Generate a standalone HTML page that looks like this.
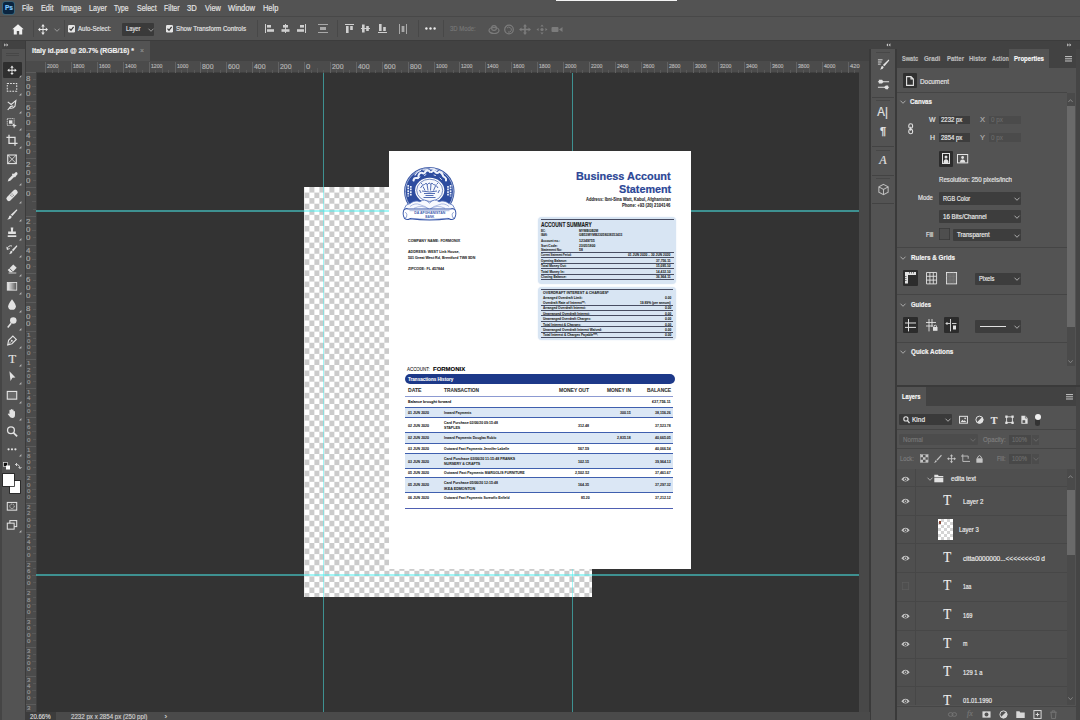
<!DOCTYPE html>
<html lang="en"><head><meta charset="utf-8"><title>Photoshop</title>
<style>
html,body{margin:0;padding:0;background:#333;}
body{width:1080px;height:720px;position:relative;overflow:hidden;font-family:"Liberation Sans",sans-serif;}
#app{position:absolute;left:0;top:0;width:1080px;height:720px;overflow:hidden;background:#333;}
#app div,#app span.t,#app svg{position:absolute;}
span.t{white-space:nowrap;display:block;}
svg{overflow:visible}
span.t{-webkit-text-stroke:0.18px currentColor;}

</style></head><body><div id="app">
<div style="left:0px;top:0px;width:1080px;height:16px;background:#535353;"></div>
<div style="left:0px;top:16px;width:1080px;height:24px;background:#535353;"></div>
<div style="left:0px;top:16px;width:1080px;height:1px;background:#484848;"></div>
<div style="left:555.5px;top:0px;width:121px;height:1.3px;background:#f4f4f4;"></div>
<div style="left:3px;top:2px;width:11px;height:12px;background:#0a2540;border-radius:2px;box-shadow:0 0 0 0.6px #2a6f8f;"></div>
<span class="t" style="top:4.08px;height:8.45px;line-height:8.45px;font-size:6.5px;color:#7fc8ff;font-weight:bold;left:4.6px;transform-origin:0 50%;transform:scale(1.0059,1.0000);">Ps</span>
<span class="t" style="top:2.71px;height:11.18px;line-height:11.18px;font-size:8.6px;color:#e4e4e4;left:22px;transform-origin:0 50%;transform:scale(0.8081,1.0000);">File</span>
<span class="t" style="top:2.71px;height:11.18px;line-height:11.18px;font-size:8.6px;color:#e4e4e4;left:40.6px;transform-origin:0 50%;transform:scale(0.8439,1.0000);">Edit</span>
<span class="t" style="top:2.71px;height:11.18px;line-height:11.18px;font-size:8.6px;color:#e4e4e4;left:60.9px;transform-origin:0 50%;transform:scale(0.8455,1.0000);">Image</span>
<span class="t" style="top:2.71px;height:11.18px;line-height:11.18px;font-size:8.6px;color:#e4e4e4;left:88.9px;transform-origin:0 50%;transform:scale(0.8279,1.0000);">Layer</span>
<span class="t" style="top:2.71px;height:11.18px;line-height:11.18px;font-size:8.6px;color:#e4e4e4;left:114.4px;transform-origin:0 50%;transform:scale(0.7779,1.0000);">Type</span>
<span class="t" style="top:2.71px;height:11.18px;line-height:11.18px;font-size:8.6px;color:#e4e4e4;left:137.1px;transform-origin:0 50%;transform:scale(0.8204,1.0000);">Select</span>
<span class="t" style="top:2.71px;height:11.18px;line-height:11.18px;font-size:8.6px;color:#e4e4e4;left:164.4px;transform-origin:0 50%;transform:scale(0.8164,1.0000);">Filter</span>
<span class="t" style="top:2.71px;height:11.18px;line-height:11.18px;font-size:8.6px;color:#e4e4e4;left:187.3px;transform-origin:0 50%;transform:scale(0.8909,1.0000);">3D</span>
<span class="t" style="top:2.71px;height:11.18px;line-height:11.18px;font-size:8.6px;color:#e4e4e4;left:204.9px;transform-origin:0 50%;transform:scale(0.8548,1.0000);">View</span>
<span class="t" style="top:2.71px;height:11.18px;line-height:11.18px;font-size:8.6px;color:#e4e4e4;left:227.8px;transform-origin:0 50%;transform:scale(0.8863,1.0000);">Window</span>
<span class="t" style="top:2.71px;height:11.18px;line-height:11.18px;font-size:8.6px;color:#e4e4e4;left:262.9px;transform-origin:0 50%;transform:scale(0.8650,1.0000);">Help</span>
<svg style="left:12px;top:23.5px" width="12" height="11" viewBox="0 0 12 11"><path d="M6 0.3 L0.3 5.3 H1.8 V10.6 H4.8 V7 H7.2 V10.6 H10.2 V5.3 H11.7 Z" fill="#f0f0f0"/></svg>
<div style="left:33px;top:20px;width:1px;height:17px;background:#484848;"></div>
<svg style="left:38.3px;top:23.6px" width="10" height="11" viewBox="0 0 10 10" preserveAspectRatio="none"><path d="M5 0 L6.8 2.2 H5.5 V4.5 H7.8 V3.2 L10 5 L7.8 6.8 V5.5 H5.5 V7.8 H6.8 L5 10 L3.2 7.8 H4.5 V5.5 H2.2 V6.8 L0 5 L2.2 3.2 V4.5 H4.5 V2.2 H3.2 Z" fill="#e8e8e8"/></svg>
<svg style="left:53.7px;top:27.8px" width="6" height="4" viewBox="0 0 6 4"><path d="M0.5 0.7 L3 3.3 L5.5 0.7" fill="none" stroke="#9a9a9a" stroke-width="1"/></svg>
<div style="left:64px;top:20px;width:1px;height:17px;background:#484848;"></div>
<svg style="left:68.2px;top:25px" width="7" height="7.4" viewBox="0 0 7 7.4"><rect x="0" y="0" width="7" height="7.4" rx="1.2" fill="#e6e6e6"/><path d="M1.5 3.6 L3 5.3 L5.6 1.8" fill="none" stroke="#333" stroke-width="1.2"/></svg>
<span class="t" style="top:23.8px;height:10.4px;line-height:10.4px;font-size:8px;color:#e6e6e6;left:78.1px;transform-origin:0 50%;transform:scale(0.7573,1.0000);">Auto-Select:</span>
<div style="left:121.5px;top:23.2px;width:32.5px;height:12.4px;background:#3a3a3a;border-radius:1px;"></div>
<span class="t" style="top:24.26px;height:9.88px;line-height:9.88px;font-size:7.6px;color:#e6e6e6;left:126.2px;transform-origin:0 50%;transform:scale(0.7632,1.0000);">Layer</span>
<svg style="left:147.8px;top:28px" width="6" height="4" viewBox="0 0 6 4"><path d="M0.5 0.7 L3 3.3 L5.5 0.7" fill="none" stroke="#9a9a9a" stroke-width="1"/></svg>
<svg style="left:165.6px;top:25px" width="7" height="7.4" viewBox="0 0 7 7.4"><rect x="0" y="0" width="7" height="7.4" rx="1.2" fill="#e6e6e6"/><path d="M1.5 3.6 L3 5.3 L5.6 1.8" fill="none" stroke="#333" stroke-width="1.2"/></svg>
<span class="t" style="top:23.8px;height:10.4px;line-height:10.4px;font-size:8px;color:#e6e6e6;left:175.6px;transform-origin:0 50%;transform:scale(0.7755,1.0000);">Show Transform Controls</span>
<div style="left:257px;top:20px;width:1px;height:17px;background:#484848;"></div>
<svg style="left:264.5px;top:24px" width="10" height="10" viewBox="0 0 10 10"><rect x="0" y="0" width="1" height="9" fill="#cfcfcf"/><rect x="2" y="1" width="4" height="2.6" fill="#cfcfcf"/><rect x="2" y="5.2" width="7" height="2.6" fill="#cfcfcf"/></svg>
<svg style="left:281.3px;top:24px" width="10" height="10" viewBox="0 0 10 10"><rect x="4" y="0" width="1" height="9" fill="#cfcfcf"/><rect x="2" y="1" width="5" height="2.6" fill="#cfcfcf"/><rect x="0.5" y="5.2" width="8" height="2.6" fill="#cfcfcf"/></svg>
<svg style="left:296.9px;top:24px" width="10" height="10" viewBox="0 0 10 10"><rect x="8" y="0" width="1" height="9" fill="#cfcfcf"/><rect x="3" y="1" width="4" height="2.6" fill="#cfcfcf"/><rect x="0" y="5.2" width="7" height="2.6" fill="#cfcfcf"/></svg>
<svg style="left:317.5px;top:24px" width="10" height="10" viewBox="0 0 10 10"><rect x="0" y="0" width="10" height="1" fill="#a8a8a8"/><rect x="0" y="8" width="10" height="1" fill="#a8a8a8"/><rect x="2" y="3" width="6" height="3" fill="#a8a8a8"/></svg>
<div style="left:337px;top:20px;width:1px;height:17px;background:#484848;"></div>
<svg style="left:344.9px;top:24px" width="10" height="10" viewBox="0 0 10 10"><rect x="0" y="0" width="9" height="1" fill="#cfcfcf"/><rect x="1" y="2" width="2.6" height="7" fill="#cfcfcf"/><rect x="5.2" y="2" width="2.6" height="4" fill="#cfcfcf"/></svg>
<svg style="left:361.1px;top:24px" width="10" height="10" viewBox="0 0 10 10"><rect x="0" y="4" width="9" height="1" fill="#cfcfcf"/><rect x="1" y="0.5" width="2.6" height="8" fill="#cfcfcf"/><rect x="5.2" y="2" width="2.6" height="5" fill="#cfcfcf"/></svg>
<svg style="left:377.5px;top:24px" width="10" height="10" viewBox="0 0 10 10"><rect x="0" y="8" width="9" height="1" fill="#cfcfcf"/><rect x="1" y="0" width="2.6" height="7" fill="#cfcfcf"/><rect x="5.2" y="3" width="2.6" height="4" fill="#cfcfcf"/></svg>
<svg style="left:399.0px;top:24px" width="10" height="10" viewBox="0 0 10 10"><rect x="0" y="0" width="1" height="10" fill="#a8a8a8"/><rect x="7" y="0" width="1" height="10" fill="#a8a8a8"/><rect x="2.6" y="2" width="2.8" height="6" fill="#a8a8a8"/></svg>
<div style="left:417.5px;top:20px;width:1px;height:17px;background:#484848;"></div>
<svg style="left:425px;top:27.3px" width="11" height="3" viewBox="0 0 11 3"><circle cx="1.4" cy="1.5" r="1.2" fill="#ececec"/><circle cx="5.5" cy="1.5" r="1.2" fill="#ececec"/><circle cx="9.6" cy="1.5" r="1.2" fill="#ececec"/></svg>
<div style="left:443px;top:20px;width:1px;height:17px;background:#484848;"></div>
<span class="t" style="top:24.06px;height:9.88px;line-height:9.88px;font-size:7.6px;color:#777;left:450px;transform-origin:0 50%;transform:scale(0.7803,1.0000);">3D Mode:</span>
<svg style="left:487.7px;top:23.5px" width="12" height="11" viewBox="0 0 12 11"><ellipse cx="6" cy="6.5" rx="5" ry="3" fill="none" stroke="#7c7c7c" stroke-width="1.2"/><circle cx="6" cy="4" r="2.4" fill="none" stroke="#7c7c7c" stroke-width="1.1"/></svg>
<svg style="left:503.3px;top:23.5px" width="12" height="11" viewBox="0 0 12 11"><circle cx="6" cy="5.5" r="4.3" fill="none" stroke="#7c7c7c" stroke-width="1.2"/><path d="M4 4 A2.5 2.5 0 1 1 5 8" fill="none" stroke="#7c7c7c" stroke-width="1"/></svg>
<svg style="left:519px;top:23.5px" width="12" height="11" viewBox="0 0 12 11"><path d="M6 0 L8 2.5 H6.8 V4.7 H9.5 V3.5 L12 5.5 L9.5 7.5 V6.3 H6.8 V8.5 H8 L6 11 L4 8.5 H5.2 V6.3 H2.5 V7.5 L0 5.5 L2.5 3.5 V4.7 H5.2 V2.5 H4 Z" fill="#7c7c7c"/></svg>
<svg style="left:536px;top:23.5px" width="12" height="11" viewBox="0 0 12 11"><path d="M6 0.5 L7.6 2.6 H4.4 Z M6 10.5 L7.6 8.4 H4.4 Z M0.5 5.5 L2.6 3.9 V7.1 Z M11.5 5.5 L9.4 3.9 V7.1 Z" fill="#7c7c7c"/><circle cx="6" cy="5.5" r="1.6" fill="#7c7c7c"/></svg>
<svg style="left:551.3px;top:23.5px" width="12" height="11" viewBox="0 0 12 11"><rect x="0.5" y="3" width="7" height="5" rx="1" fill="#7c7c7c"/><path d="M8 5.5 L11.5 3 V8 Z" fill="#7c7c7c"/></svg>
<div style="left:0px;top:40px;width:1080px;height:1px;background:#3c3c3c;"></div>
<div style="left:0px;top:41px;width:870px;height:20px;background:#424242;"></div>
<div style="left:25px;top:41px;width:125px;height:20px;background:#535353;"></div>
<span class="t" style="top:46.23px;height:10.14px;line-height:10.14px;font-size:7.8px;color:#f0f0f0;font-weight:bold;left:32px;transform-origin:0 50%;transform:scale(0.8831,1.0000);">Italy id.psd @ 20.7% (RGB/16) *</span>
<span class="t" style="top:46.1px;height:10.4px;line-height:10.4px;font-size:8px;color:#909090;left:139.5px;transform-origin:0 50%;transform:scale(0.8562,1.0000);">×</span>
<div style="left:25px;top:61px;width:845px;height:651px;background:#333333;"></div>
<div style="left:859px;top:61px;width:10px;height:651px;background:#484848;"></div>
<div style="left:869px;top:41px;width:2px;height:680px;background:#3a3a3a;"></div>
<div style="left:25px;top:61px;width:834px;height:11.5px;background:#4b4b4b;"></div>
<div style="left:25px;top:61px;width:11px;height:651px;background:#4b4b4b;"></div>
<div style="left:25px;top:72px;width:834px;height:0.8px;background:#3e3e3e;"></div>
<div style="left:35.5px;top:72px;width:0.8px;height:640px;background:#3e3e3e;"></div>
<div style="left:45.0px;top:61.5px;width:0.8px;height:11px;background:#626262;"></div>
<div style="left:51.5px;top:69.5px;width:0.6px;height:3px;background:#585858;"></div>
<div style="left:58.0px;top:68px;width:0.6px;height:4.5px;background:#585858;"></div>
<div style="left:64.4px;top:69.5px;width:0.6px;height:3px;background:#585858;"></div>
<span class="t" style="top:62.66px;height:7.28px;line-height:7.28px;font-size:5.6px;color:#b4b4b4;left:47.0px;transform-origin:0 50%;transform:scale(0.9235,1.0000);">2000</span>
<div style="left:70.9px;top:61.5px;width:0.8px;height:11px;background:#626262;"></div>
<div style="left:77.4px;top:69.5px;width:0.6px;height:3px;background:#585858;"></div>
<div style="left:83.9px;top:68px;width:0.6px;height:4.5px;background:#585858;"></div>
<div style="left:90.3px;top:69.5px;width:0.6px;height:3px;background:#585858;"></div>
<span class="t" style="top:62.66px;height:7.28px;line-height:7.28px;font-size:5.6px;color:#b4b4b4;left:72.9px;transform-origin:0 50%;transform:scale(0.9235,1.0000);">1800</span>
<div style="left:96.8px;top:61.5px;width:0.8px;height:11px;background:#626262;"></div>
<div style="left:103.3px;top:69.5px;width:0.6px;height:3px;background:#585858;"></div>
<div style="left:109.8px;top:68px;width:0.6px;height:4.5px;background:#585858;"></div>
<div style="left:116.2px;top:69.5px;width:0.6px;height:3px;background:#585858;"></div>
<span class="t" style="top:62.66px;height:7.28px;line-height:7.28px;font-size:5.6px;color:#b4b4b4;left:98.8px;transform-origin:0 50%;transform:scale(0.9235,1.0000);">1600</span>
<div style="left:122.7px;top:61.5px;width:0.8px;height:11px;background:#626262;"></div>
<div style="left:129.2px;top:69.5px;width:0.6px;height:3px;background:#585858;"></div>
<div style="left:135.7px;top:68px;width:0.6px;height:4.5px;background:#585858;"></div>
<div style="left:142.1px;top:69.5px;width:0.6px;height:3px;background:#585858;"></div>
<span class="t" style="top:62.66px;height:7.28px;line-height:7.28px;font-size:5.6px;color:#b4b4b4;left:124.7px;transform-origin:0 50%;transform:scale(0.9235,1.0000);">1400</span>
<div style="left:148.6px;top:61.5px;width:0.8px;height:11px;background:#626262;"></div>
<div style="left:155.1px;top:69.5px;width:0.6px;height:3px;background:#585858;"></div>
<div style="left:161.6px;top:68px;width:0.6px;height:4.5px;background:#585858;"></div>
<div style="left:168.0px;top:69.5px;width:0.6px;height:3px;background:#585858;"></div>
<span class="t" style="top:62.66px;height:7.28px;line-height:7.28px;font-size:5.6px;color:#b4b4b4;left:150.6px;transform-origin:0 50%;transform:scale(0.9235,1.0000);">1200</span>
<div style="left:174.5px;top:61.5px;width:0.8px;height:11px;background:#626262;"></div>
<div style="left:181.0px;top:69.5px;width:0.6px;height:3px;background:#585858;"></div>
<div style="left:187.4px;top:68px;width:0.6px;height:4.5px;background:#585858;"></div>
<div style="left:193.9px;top:69.5px;width:0.6px;height:3px;background:#585858;"></div>
<span class="t" style="top:62.66px;height:7.28px;line-height:7.28px;font-size:5.6px;color:#b4b4b4;left:176.5px;transform-origin:0 50%;transform:scale(0.9235,1.0000);">1000</span>
<div style="left:200.4px;top:61.5px;width:0.8px;height:11px;background:#626262;"></div>
<div style="left:206.9px;top:69.5px;width:0.6px;height:3px;background:#585858;"></div>
<div style="left:213.3px;top:68px;width:0.6px;height:4.5px;background:#585858;"></div>
<div style="left:219.8px;top:69.5px;width:0.6px;height:3px;background:#585858;"></div>
<span class="t" style="top:61.75px;height:9.1px;line-height:9.1px;font-size:7px;color:#b4b4b4;left:202.4px;transform-origin:0 50%;transform:scale(0.9840,1.0000);">800</span>
<div style="left:226.3px;top:61.5px;width:0.8px;height:11px;background:#626262;"></div>
<div style="left:232.8px;top:69.5px;width:0.6px;height:3px;background:#585858;"></div>
<div style="left:239.2px;top:68px;width:0.6px;height:4.5px;background:#585858;"></div>
<div style="left:245.7px;top:69.5px;width:0.6px;height:3px;background:#585858;"></div>
<span class="t" style="top:61.75px;height:9.1px;line-height:9.1px;font-size:7px;color:#b4b4b4;left:228.3px;transform-origin:0 50%;transform:scale(0.9840,1.0000);">600</span>
<div style="left:252.2px;top:61.5px;width:0.8px;height:11px;background:#626262;"></div>
<div style="left:258.7px;top:69.5px;width:0.6px;height:3px;background:#585858;"></div>
<div style="left:265.1px;top:68px;width:0.6px;height:4.5px;background:#585858;"></div>
<div style="left:271.6px;top:69.5px;width:0.6px;height:3px;background:#585858;"></div>
<span class="t" style="top:61.75px;height:9.1px;line-height:9.1px;font-size:7px;color:#b4b4b4;left:254.2px;transform-origin:0 50%;transform:scale(0.9840,1.0000);">400</span>
<div style="left:278.1px;top:61.5px;width:0.8px;height:11px;background:#626262;"></div>
<div style="left:284.6px;top:69.5px;width:0.6px;height:3px;background:#585858;"></div>
<div style="left:291.1px;top:68px;width:0.6px;height:4.5px;background:#585858;"></div>
<div style="left:297.5px;top:69.5px;width:0.6px;height:3px;background:#585858;"></div>
<span class="t" style="top:61.75px;height:9.1px;line-height:9.1px;font-size:7px;color:#b4b4b4;left:280.1px;transform-origin:0 50%;transform:scale(0.9840,1.0000);">200</span>
<div style="left:304.0px;top:61.5px;width:0.8px;height:11px;background:#626262;"></div>
<div style="left:310.5px;top:69.5px;width:0.6px;height:3px;background:#585858;"></div>
<div style="left:316.9px;top:68px;width:0.6px;height:4.5px;background:#585858;"></div>
<div style="left:323.4px;top:69.5px;width:0.6px;height:3px;background:#585858;"></div>
<span class="t" style="top:61.75px;height:9.1px;line-height:9.1px;font-size:7px;color:#b4b4b4;left:306.0px;transform-origin:0 50%;transform:scale(1.0752,1.0000);">0</span>
<div style="left:329.9px;top:61.5px;width:0.8px;height:11px;background:#626262;"></div>
<div style="left:336.4px;top:69.5px;width:0.6px;height:3px;background:#585858;"></div>
<div style="left:342.8px;top:68px;width:0.6px;height:4.5px;background:#585858;"></div>
<div style="left:349.3px;top:69.5px;width:0.6px;height:3px;background:#585858;"></div>
<span class="t" style="top:61.75px;height:9.1px;line-height:9.1px;font-size:7px;color:#b4b4b4;left:331.9px;transform-origin:0 50%;transform:scale(0.9840,1.0000);">200</span>
<div style="left:355.8px;top:61.5px;width:0.8px;height:11px;background:#626262;"></div>
<div style="left:362.3px;top:69.5px;width:0.6px;height:3px;background:#585858;"></div>
<div style="left:368.8px;top:68px;width:0.6px;height:4.5px;background:#585858;"></div>
<div style="left:375.2px;top:69.5px;width:0.6px;height:3px;background:#585858;"></div>
<span class="t" style="top:61.75px;height:9.1px;line-height:9.1px;font-size:7px;color:#b4b4b4;left:357.8px;transform-origin:0 50%;transform:scale(0.9840,1.0000);">400</span>
<div style="left:381.7px;top:61.5px;width:0.8px;height:11px;background:#626262;"></div>
<div style="left:388.2px;top:69.5px;width:0.6px;height:3px;background:#585858;"></div>
<div style="left:394.6px;top:68px;width:0.6px;height:4.5px;background:#585858;"></div>
<div style="left:401.1px;top:69.5px;width:0.6px;height:3px;background:#585858;"></div>
<span class="t" style="top:61.75px;height:9.1px;line-height:9.1px;font-size:7px;color:#b4b4b4;left:383.7px;transform-origin:0 50%;transform:scale(0.9840,1.0000);">600</span>
<div style="left:407.6px;top:61.5px;width:0.8px;height:11px;background:#626262;"></div>
<div style="left:414.1px;top:69.5px;width:0.6px;height:3px;background:#585858;"></div>
<div style="left:420.6px;top:68px;width:0.6px;height:4.5px;background:#585858;"></div>
<div style="left:427.0px;top:69.5px;width:0.6px;height:3px;background:#585858;"></div>
<span class="t" style="top:61.75px;height:9.1px;line-height:9.1px;font-size:7px;color:#b4b4b4;left:409.6px;transform-origin:0 50%;transform:scale(0.9840,1.0000);">800</span>
<div style="left:433.5px;top:61.5px;width:0.8px;height:11px;background:#626262;"></div>
<div style="left:440.0px;top:69.5px;width:0.6px;height:3px;background:#585858;"></div>
<div style="left:446.4px;top:68px;width:0.6px;height:4.5px;background:#585858;"></div>
<div style="left:452.9px;top:69.5px;width:0.6px;height:3px;background:#585858;"></div>
<span class="t" style="top:62.66px;height:7.28px;line-height:7.28px;font-size:5.6px;color:#b4b4b4;left:435.5px;transform-origin:0 50%;transform:scale(0.9235,1.0000);">1000</span>
<div style="left:459.4px;top:61.5px;width:0.8px;height:11px;background:#626262;"></div>
<div style="left:465.9px;top:69.5px;width:0.6px;height:3px;background:#585858;"></div>
<div style="left:472.3px;top:68px;width:0.6px;height:4.5px;background:#585858;"></div>
<div style="left:478.8px;top:69.5px;width:0.6px;height:3px;background:#585858;"></div>
<span class="t" style="top:62.66px;height:7.28px;line-height:7.28px;font-size:5.6px;color:#b4b4b4;left:461.4px;transform-origin:0 50%;transform:scale(0.9235,1.0000);">1200</span>
<div style="left:485.3px;top:61.5px;width:0.8px;height:11px;background:#626262;"></div>
<div style="left:491.8px;top:69.5px;width:0.6px;height:3px;background:#585858;"></div>
<div style="left:498.2px;top:68px;width:0.6px;height:4.5px;background:#585858;"></div>
<div style="left:504.7px;top:69.5px;width:0.6px;height:3px;background:#585858;"></div>
<span class="t" style="top:62.66px;height:7.28px;line-height:7.28px;font-size:5.6px;color:#b4b4b4;left:487.3px;transform-origin:0 50%;transform:scale(0.9235,1.0000);">1400</span>
<div style="left:511.2px;top:61.5px;width:0.8px;height:11px;background:#626262;"></div>
<div style="left:517.7px;top:69.5px;width:0.6px;height:3px;background:#585858;"></div>
<div style="left:524.1px;top:68px;width:0.6px;height:4.5px;background:#585858;"></div>
<div style="left:530.6px;top:69.5px;width:0.6px;height:3px;background:#585858;"></div>
<span class="t" style="top:62.66px;height:7.28px;line-height:7.28px;font-size:5.6px;color:#b4b4b4;left:513.2px;transform-origin:0 50%;transform:scale(0.9235,1.0000);">1600</span>
<div style="left:537.1px;top:61.5px;width:0.8px;height:11px;background:#626262;"></div>
<div style="left:543.6px;top:69.5px;width:0.6px;height:3px;background:#585858;"></div>
<div style="left:550.1px;top:68px;width:0.6px;height:4.5px;background:#585858;"></div>
<div style="left:556.5px;top:69.5px;width:0.6px;height:3px;background:#585858;"></div>
<span class="t" style="top:62.66px;height:7.28px;line-height:7.28px;font-size:5.6px;color:#b4b4b4;left:539.1px;transform-origin:0 50%;transform:scale(0.9235,1.0000);">1800</span>
<div style="left:563.0px;top:61.5px;width:0.8px;height:11px;background:#626262;"></div>
<div style="left:569.5px;top:69.5px;width:0.6px;height:3px;background:#585858;"></div>
<div style="left:576.0px;top:68px;width:0.6px;height:4.5px;background:#585858;"></div>
<div style="left:582.4px;top:69.5px;width:0.6px;height:3px;background:#585858;"></div>
<span class="t" style="top:62.66px;height:7.28px;line-height:7.28px;font-size:5.6px;color:#b4b4b4;left:565.0px;transform-origin:0 50%;transform:scale(0.9235,1.0000);">2000</span>
<div style="left:588.9px;top:61.5px;width:0.8px;height:11px;background:#626262;"></div>
<div style="left:595.4px;top:69.5px;width:0.6px;height:3px;background:#585858;"></div>
<div style="left:601.9px;top:68px;width:0.6px;height:4.5px;background:#585858;"></div>
<div style="left:608.3px;top:69.5px;width:0.6px;height:3px;background:#585858;"></div>
<span class="t" style="top:62.66px;height:7.28px;line-height:7.28px;font-size:5.6px;color:#b4b4b4;left:590.9px;transform-origin:0 50%;transform:scale(0.9235,1.0000);">2200</span>
<div style="left:614.8px;top:61.5px;width:0.8px;height:11px;background:#626262;"></div>
<div style="left:621.3px;top:69.5px;width:0.6px;height:3px;background:#585858;"></div>
<div style="left:627.8px;top:68px;width:0.6px;height:4.5px;background:#585858;"></div>
<div style="left:634.2px;top:69.5px;width:0.6px;height:3px;background:#585858;"></div>
<span class="t" style="top:62.66px;height:7.28px;line-height:7.28px;font-size:5.6px;color:#b4b4b4;left:616.8px;transform-origin:0 50%;transform:scale(0.9235,1.0000);">2400</span>
<div style="left:640.7px;top:61.5px;width:0.8px;height:11px;background:#626262;"></div>
<div style="left:647.2px;top:69.5px;width:0.6px;height:3px;background:#585858;"></div>
<div style="left:653.7px;top:68px;width:0.6px;height:4.5px;background:#585858;"></div>
<div style="left:660.1px;top:69.5px;width:0.6px;height:3px;background:#585858;"></div>
<span class="t" style="top:62.66px;height:7.28px;line-height:7.28px;font-size:5.6px;color:#b4b4b4;left:642.7px;transform-origin:0 50%;transform:scale(0.9235,1.0000);">2600</span>
<div style="left:666.6px;top:61.5px;width:0.8px;height:11px;background:#626262;"></div>
<div style="left:673.1px;top:69.5px;width:0.6px;height:3px;background:#585858;"></div>
<div style="left:679.5px;top:68px;width:0.6px;height:4.5px;background:#585858;"></div>
<div style="left:686.0px;top:69.5px;width:0.6px;height:3px;background:#585858;"></div>
<span class="t" style="top:62.66px;height:7.28px;line-height:7.28px;font-size:5.6px;color:#b4b4b4;left:668.6px;transform-origin:0 50%;transform:scale(0.9235,1.0000);">2800</span>
<div style="left:692.5px;top:61.5px;width:0.8px;height:11px;background:#626262;"></div>
<div style="left:699.0px;top:69.5px;width:0.6px;height:3px;background:#585858;"></div>
<div style="left:705.5px;top:68px;width:0.6px;height:4.5px;background:#585858;"></div>
<div style="left:711.9px;top:69.5px;width:0.6px;height:3px;background:#585858;"></div>
<span class="t" style="top:62.66px;height:7.28px;line-height:7.28px;font-size:5.6px;color:#b4b4b4;left:694.5px;transform-origin:0 50%;transform:scale(0.9235,1.0000);">3000</span>
<div style="left:718.4px;top:61.5px;width:0.8px;height:11px;background:#626262;"></div>
<div style="left:724.9px;top:69.5px;width:0.6px;height:3px;background:#585858;"></div>
<div style="left:731.4px;top:68px;width:0.6px;height:4.5px;background:#585858;"></div>
<div style="left:737.8px;top:69.5px;width:0.6px;height:3px;background:#585858;"></div>
<span class="t" style="top:62.66px;height:7.28px;line-height:7.28px;font-size:5.6px;color:#b4b4b4;left:720.4px;transform-origin:0 50%;transform:scale(0.9235,1.0000);">3200</span>
<div style="left:744.3px;top:61.5px;width:0.8px;height:11px;background:#626262;"></div>
<div style="left:750.8px;top:69.5px;width:0.6px;height:3px;background:#585858;"></div>
<div style="left:757.2px;top:68px;width:0.6px;height:4.5px;background:#585858;"></div>
<div style="left:763.7px;top:69.5px;width:0.6px;height:3px;background:#585858;"></div>
<span class="t" style="top:62.66px;height:7.28px;line-height:7.28px;font-size:5.6px;color:#b4b4b4;left:746.3px;transform-origin:0 50%;transform:scale(0.9235,1.0000);">3400</span>
<div style="left:770.2px;top:61.5px;width:0.8px;height:11px;background:#626262;"></div>
<div style="left:776.7px;top:69.5px;width:0.6px;height:3px;background:#585858;"></div>
<div style="left:783.2px;top:68px;width:0.6px;height:4.5px;background:#585858;"></div>
<div style="left:789.6px;top:69.5px;width:0.6px;height:3px;background:#585858;"></div>
<span class="t" style="top:62.66px;height:7.28px;line-height:7.28px;font-size:5.6px;color:#b4b4b4;left:772.2px;transform-origin:0 50%;transform:scale(0.9235,1.0000);">3600</span>
<div style="left:796.1px;top:61.5px;width:0.8px;height:11px;background:#626262;"></div>
<div style="left:802.6px;top:69.5px;width:0.6px;height:3px;background:#585858;"></div>
<div style="left:809.0px;top:68px;width:0.6px;height:4.5px;background:#585858;"></div>
<div style="left:815.5px;top:69.5px;width:0.6px;height:3px;background:#585858;"></div>
<span class="t" style="top:62.66px;height:7.28px;line-height:7.28px;font-size:5.6px;color:#b4b4b4;left:798.1px;transform-origin:0 50%;transform:scale(0.9235,1.0000);">3800</span>
<div style="left:822.0px;top:61.5px;width:0.8px;height:11px;background:#626262;"></div>
<div style="left:828.5px;top:69.5px;width:0.6px;height:3px;background:#585858;"></div>
<div style="left:835.0px;top:68px;width:0.6px;height:4.5px;background:#585858;"></div>
<div style="left:841.4px;top:69.5px;width:0.6px;height:3px;background:#585858;"></div>
<span class="t" style="top:62.66px;height:7.28px;line-height:7.28px;font-size:5.6px;color:#b4b4b4;left:824.0px;transform-origin:0 50%;transform:scale(0.9235,1.0000);">4000</span>
<div style="left:847.9px;top:61.5px;width:0.8px;height:11px;background:#626262;"></div>
<div style="left:854.4px;top:69.5px;width:0.6px;height:3px;background:#585858;"></div>
<span class="t" style="top:62.66px;height:7.28px;line-height:7.28px;font-size:5.6px;color:#b4b4b4;left:849.9px;transform-origin:0 50%;transform:scale(1.0274,1.0000);">420</span>
<div style="left:26px;top:72.0px;width:10px;height:0.8px;background:#5c5c5c;"></div>
<div style="left:33px;top:79.2px;width:3px;height:0.6px;background:#585858;"></div>
<div style="left:31.5px;top:86.4px;width:4.5px;height:0.6px;background:#585858;"></div>
<div style="left:33px;top:93.6px;width:3px;height:0.6px;background:#585858;"></div>
<span class="t" style="top:73.79px;height:9.62px;line-height:9.62px;font-size:7.4px;color:#a6a6a6;left:26.2px;transform-origin:0 50%;transform:scale(1.0667,1.0000);">8</span>
<span class="t" style="top:81.59px;height:9.62px;line-height:9.62px;font-size:7.4px;color:#a6a6a6;left:26.2px;transform-origin:0 50%;transform:scale(1.0667,1.0000);">0</span>
<span class="t" style="top:89.39px;height:9.62px;line-height:9.62px;font-size:7.4px;color:#a6a6a6;left:26.2px;transform-origin:0 50%;transform:scale(1.0667,1.0000);">0</span>
<div style="left:26px;top:100.8px;width:10px;height:0.8px;background:#5c5c5c;"></div>
<div style="left:33px;top:108.0px;width:3px;height:0.6px;background:#585858;"></div>
<div style="left:31.5px;top:115.2px;width:4.5px;height:0.6px;background:#585858;"></div>
<div style="left:33px;top:122.3px;width:3px;height:0.6px;background:#585858;"></div>
<span class="t" style="top:102.59px;height:9.62px;line-height:9.62px;font-size:7.4px;color:#a6a6a6;left:26.2px;transform-origin:0 50%;transform:scale(1.0667,1.0000);">6</span>
<span class="t" style="top:110.39px;height:9.62px;line-height:9.62px;font-size:7.4px;color:#a6a6a6;left:26.2px;transform-origin:0 50%;transform:scale(1.0667,1.0000);">0</span>
<span class="t" style="top:118.19px;height:9.62px;line-height:9.62px;font-size:7.4px;color:#a6a6a6;left:26.2px;transform-origin:0 50%;transform:scale(1.0667,1.0000);">0</span>
<div style="left:26px;top:129.5px;width:10px;height:0.8px;background:#5c5c5c;"></div>
<div style="left:33px;top:136.7px;width:3px;height:0.6px;background:#585858;"></div>
<div style="left:31.5px;top:143.9px;width:4.5px;height:0.6px;background:#585858;"></div>
<div style="left:33px;top:151.1px;width:3px;height:0.6px;background:#585858;"></div>
<span class="t" style="top:131.29px;height:9.62px;line-height:9.62px;font-size:7.4px;color:#a6a6a6;left:26.2px;transform-origin:0 50%;transform:scale(1.0667,1.0000);">4</span>
<span class="t" style="top:139.09px;height:9.62px;line-height:9.62px;font-size:7.4px;color:#a6a6a6;left:26.2px;transform-origin:0 50%;transform:scale(1.0667,1.0000);">0</span>
<span class="t" style="top:146.89px;height:9.62px;line-height:9.62px;font-size:7.4px;color:#a6a6a6;left:26.2px;transform-origin:0 50%;transform:scale(1.0667,1.0000);">0</span>
<div style="left:26px;top:158.3px;width:10px;height:0.8px;background:#5c5c5c;"></div>
<div style="left:33px;top:165.4px;width:3px;height:0.6px;background:#585858;"></div>
<div style="left:31.5px;top:172.6px;width:4.5px;height:0.6px;background:#585858;"></div>
<div style="left:33px;top:179.8px;width:3px;height:0.6px;background:#585858;"></div>
<span class="t" style="top:160.09px;height:9.62px;line-height:9.62px;font-size:7.4px;color:#a6a6a6;left:26.2px;transform-origin:0 50%;transform:scale(1.0667,1.0000);">2</span>
<span class="t" style="top:167.89px;height:9.62px;line-height:9.62px;font-size:7.4px;color:#a6a6a6;left:26.2px;transform-origin:0 50%;transform:scale(1.0667,1.0000);">0</span>
<span class="t" style="top:175.69px;height:9.62px;line-height:9.62px;font-size:7.4px;color:#a6a6a6;left:26.2px;transform-origin:0 50%;transform:scale(1.0667,1.0000);">0</span>
<div style="left:26px;top:187.0px;width:10px;height:0.8px;background:#5c5c5c;"></div>
<div style="left:33px;top:194.2px;width:3px;height:0.6px;background:#585858;"></div>
<div style="left:31.5px;top:201.4px;width:4.5px;height:0.6px;background:#585858;"></div>
<div style="left:33px;top:208.6px;width:3px;height:0.6px;background:#585858;"></div>
<span class="t" style="top:188.79px;height:9.62px;line-height:9.62px;font-size:7.4px;color:#a6a6a6;left:26.2px;transform-origin:0 50%;transform:scale(1.0667,1.0000);">0</span>
<div style="left:26px;top:215.7px;width:10px;height:0.8px;background:#5c5c5c;"></div>
<div style="left:33px;top:222.9px;width:3px;height:0.6px;background:#585858;"></div>
<div style="left:31.5px;top:230.1px;width:4.5px;height:0.6px;background:#585858;"></div>
<div style="left:33px;top:237.3px;width:3px;height:0.6px;background:#585858;"></div>
<span class="t" style="top:217.49px;height:9.62px;line-height:9.62px;font-size:7.4px;color:#a6a6a6;left:26.2px;transform-origin:0 50%;transform:scale(1.0667,1.0000);">2</span>
<span class="t" style="top:225.29px;height:9.62px;line-height:9.62px;font-size:7.4px;color:#a6a6a6;left:26.2px;transform-origin:0 50%;transform:scale(1.0667,1.0000);">0</span>
<span class="t" style="top:233.09px;height:9.62px;line-height:9.62px;font-size:7.4px;color:#a6a6a6;left:26.2px;transform-origin:0 50%;transform:scale(1.0667,1.0000);">0</span>
<div style="left:26px;top:244.5px;width:10px;height:0.8px;background:#5c5c5c;"></div>
<div style="left:33px;top:251.7px;width:3px;height:0.6px;background:#585858;"></div>
<div style="left:31.5px;top:258.8px;width:4.5px;height:0.6px;background:#585858;"></div>
<div style="left:33px;top:266.0px;width:3px;height:0.6px;background:#585858;"></div>
<span class="t" style="top:246.29px;height:9.62px;line-height:9.62px;font-size:7.4px;color:#a6a6a6;left:26.2px;transform-origin:0 50%;transform:scale(1.0667,1.0000);">4</span>
<span class="t" style="top:254.09px;height:9.62px;line-height:9.62px;font-size:7.4px;color:#a6a6a6;left:26.2px;transform-origin:0 50%;transform:scale(1.0667,1.0000);">0</span>
<span class="t" style="top:261.89px;height:9.62px;line-height:9.62px;font-size:7.4px;color:#a6a6a6;left:26.2px;transform-origin:0 50%;transform:scale(1.0667,1.0000);">0</span>
<div style="left:26px;top:273.2px;width:10px;height:0.8px;background:#5c5c5c;"></div>
<div style="left:33px;top:280.4px;width:3px;height:0.6px;background:#585858;"></div>
<div style="left:31.5px;top:287.6px;width:4.5px;height:0.6px;background:#585858;"></div>
<div style="left:33px;top:294.8px;width:3px;height:0.6px;background:#585858;"></div>
<span class="t" style="top:274.99px;height:9.62px;line-height:9.62px;font-size:7.4px;color:#a6a6a6;left:26.2px;transform-origin:0 50%;transform:scale(1.0667,1.0000);">6</span>
<span class="t" style="top:282.79px;height:9.62px;line-height:9.62px;font-size:7.4px;color:#a6a6a6;left:26.2px;transform-origin:0 50%;transform:scale(1.0667,1.0000);">0</span>
<span class="t" style="top:290.59px;height:9.62px;line-height:9.62px;font-size:7.4px;color:#a6a6a6;left:26.2px;transform-origin:0 50%;transform:scale(1.0667,1.0000);">0</span>
<div style="left:26px;top:302.0px;width:10px;height:0.8px;background:#5c5c5c;"></div>
<div style="left:33px;top:309.1px;width:3px;height:0.6px;background:#585858;"></div>
<div style="left:31.5px;top:316.3px;width:4.5px;height:0.6px;background:#585858;"></div>
<div style="left:33px;top:323.5px;width:3px;height:0.6px;background:#585858;"></div>
<span class="t" style="top:303.79px;height:9.62px;line-height:9.62px;font-size:7.4px;color:#a6a6a6;left:26.2px;transform-origin:0 50%;transform:scale(1.0667,1.0000);">8</span>
<span class="t" style="top:311.59px;height:9.62px;line-height:9.62px;font-size:7.4px;color:#a6a6a6;left:26.2px;transform-origin:0 50%;transform:scale(1.0667,1.0000);">0</span>
<span class="t" style="top:319.39px;height:9.62px;line-height:9.62px;font-size:7.4px;color:#a6a6a6;left:26.2px;transform-origin:0 50%;transform:scale(1.0667,1.0000);">0</span>
<div style="left:26px;top:330.7px;width:10px;height:0.8px;background:#5c5c5c;"></div>
<div style="left:33px;top:337.9px;width:3px;height:0.6px;background:#585858;"></div>
<div style="left:31.5px;top:345.1px;width:4.5px;height:0.6px;background:#585858;"></div>
<div style="left:33px;top:352.3px;width:3px;height:0.6px;background:#585858;"></div>
<span class="t" style="top:331.79px;height:7.02px;line-height:7.02px;font-size:5.4px;color:#969696;left:26.6px;transform-origin:0 50%;transform:scale(1.1333,1.0000);">1</span>
<span class="t" style="top:337.99px;height:7.02px;line-height:7.02px;font-size:5.4px;color:#969696;left:26.6px;transform-origin:0 50%;transform:scale(1.1333,1.0000);">0</span>
<span class="t" style="top:344.19px;height:7.02px;line-height:7.02px;font-size:5.4px;color:#969696;left:26.6px;transform-origin:0 50%;transform:scale(1.1333,1.0000);">0</span>
<span class="t" style="top:350.39px;height:7.02px;line-height:7.02px;font-size:5.4px;color:#969696;left:26.6px;transform-origin:0 50%;transform:scale(1.1333,1.0000);">0</span>
<div style="left:26px;top:359.4px;width:10px;height:0.8px;background:#5c5c5c;"></div>
<div style="left:33px;top:366.6px;width:3px;height:0.6px;background:#585858;"></div>
<div style="left:31.5px;top:373.8px;width:4.5px;height:0.6px;background:#585858;"></div>
<div style="left:33px;top:381.0px;width:3px;height:0.6px;background:#585858;"></div>
<span class="t" style="top:360.49px;height:7.02px;line-height:7.02px;font-size:5.4px;color:#969696;left:26.6px;transform-origin:0 50%;transform:scale(1.1333,1.0000);">1</span>
<span class="t" style="top:366.69px;height:7.02px;line-height:7.02px;font-size:5.4px;color:#969696;left:26.6px;transform-origin:0 50%;transform:scale(1.1333,1.0000);">2</span>
<span class="t" style="top:372.89px;height:7.02px;line-height:7.02px;font-size:5.4px;color:#969696;left:26.6px;transform-origin:0 50%;transform:scale(1.1333,1.0000);">0</span>
<span class="t" style="top:379.09px;height:7.02px;line-height:7.02px;font-size:5.4px;color:#969696;left:26.6px;transform-origin:0 50%;transform:scale(1.1333,1.0000);">0</span>
<div style="left:26px;top:388.2px;width:10px;height:0.8px;background:#5c5c5c;"></div>
<div style="left:33px;top:395.4px;width:3px;height:0.6px;background:#585858;"></div>
<div style="left:31.5px;top:402.5px;width:4.5px;height:0.6px;background:#585858;"></div>
<div style="left:33px;top:409.7px;width:3px;height:0.6px;background:#585858;"></div>
<span class="t" style="top:389.29px;height:7.02px;line-height:7.02px;font-size:5.4px;color:#969696;left:26.6px;transform-origin:0 50%;transform:scale(1.1333,1.0000);">1</span>
<span class="t" style="top:395.49px;height:7.02px;line-height:7.02px;font-size:5.4px;color:#969696;left:26.6px;transform-origin:0 50%;transform:scale(1.1333,1.0000);">4</span>
<span class="t" style="top:401.69px;height:7.02px;line-height:7.02px;font-size:5.4px;color:#969696;left:26.6px;transform-origin:0 50%;transform:scale(1.1333,1.0000);">0</span>
<span class="t" style="top:407.89px;height:7.02px;line-height:7.02px;font-size:5.4px;color:#969696;left:26.6px;transform-origin:0 50%;transform:scale(1.1333,1.0000);">0</span>
<div style="left:26px;top:416.9px;width:10px;height:0.8px;background:#5c5c5c;"></div>
<div style="left:33px;top:424.1px;width:3px;height:0.6px;background:#585858;"></div>
<div style="left:31.5px;top:431.3px;width:4.5px;height:0.6px;background:#585858;"></div>
<div style="left:33px;top:438.5px;width:3px;height:0.6px;background:#585858;"></div>
<span class="t" style="top:417.99px;height:7.02px;line-height:7.02px;font-size:5.4px;color:#969696;left:26.6px;transform-origin:0 50%;transform:scale(1.1333,1.0000);">1</span>
<span class="t" style="top:424.19px;height:7.02px;line-height:7.02px;font-size:5.4px;color:#969696;left:26.6px;transform-origin:0 50%;transform:scale(1.1333,1.0000);">6</span>
<span class="t" style="top:430.39px;height:7.02px;line-height:7.02px;font-size:5.4px;color:#969696;left:26.6px;transform-origin:0 50%;transform:scale(1.1333,1.0000);">0</span>
<span class="t" style="top:436.59px;height:7.02px;line-height:7.02px;font-size:5.4px;color:#969696;left:26.6px;transform-origin:0 50%;transform:scale(1.1333,1.0000);">0</span>
<div style="left:26px;top:445.7px;width:10px;height:0.8px;background:#5c5c5c;"></div>
<div style="left:33px;top:452.8px;width:3px;height:0.6px;background:#585858;"></div>
<div style="left:31.5px;top:460.0px;width:4.5px;height:0.6px;background:#585858;"></div>
<div style="left:33px;top:467.2px;width:3px;height:0.6px;background:#585858;"></div>
<span class="t" style="top:446.79px;height:7.02px;line-height:7.02px;font-size:5.4px;color:#969696;left:26.6px;transform-origin:0 50%;transform:scale(1.1333,1.0000);">1</span>
<span class="t" style="top:452.99px;height:7.02px;line-height:7.02px;font-size:5.4px;color:#969696;left:26.6px;transform-origin:0 50%;transform:scale(1.1333,1.0000);">8</span>
<span class="t" style="top:459.19px;height:7.02px;line-height:7.02px;font-size:5.4px;color:#969696;left:26.6px;transform-origin:0 50%;transform:scale(1.1333,1.0000);">0</span>
<span class="t" style="top:465.39px;height:7.02px;line-height:7.02px;font-size:5.4px;color:#969696;left:26.6px;transform-origin:0 50%;transform:scale(1.1333,1.0000);">0</span>
<div style="left:26px;top:474.4px;width:10px;height:0.8px;background:#5c5c5c;"></div>
<div style="left:33px;top:481.6px;width:3px;height:0.6px;background:#585858;"></div>
<div style="left:31.5px;top:488.8px;width:4.5px;height:0.6px;background:#585858;"></div>
<div style="left:33px;top:496.0px;width:3px;height:0.6px;background:#585858;"></div>
<span class="t" style="top:475.49px;height:7.02px;line-height:7.02px;font-size:5.4px;color:#969696;left:26.6px;transform-origin:0 50%;transform:scale(1.1333,1.0000);">2</span>
<span class="t" style="top:481.69px;height:7.02px;line-height:7.02px;font-size:5.4px;color:#969696;left:26.6px;transform-origin:0 50%;transform:scale(1.1333,1.0000);">0</span>
<span class="t" style="top:487.89px;height:7.02px;line-height:7.02px;font-size:5.4px;color:#969696;left:26.6px;transform-origin:0 50%;transform:scale(1.1333,1.0000);">0</span>
<span class="t" style="top:494.09px;height:7.02px;line-height:7.02px;font-size:5.4px;color:#969696;left:26.6px;transform-origin:0 50%;transform:scale(1.1333,1.0000);">0</span>
<div style="left:26px;top:503.1px;width:10px;height:0.8px;background:#5c5c5c;"></div>
<div style="left:33px;top:510.3px;width:3px;height:0.6px;background:#585858;"></div>
<div style="left:31.5px;top:517.5px;width:4.5px;height:0.6px;background:#585858;"></div>
<div style="left:33px;top:524.7px;width:3px;height:0.6px;background:#585858;"></div>
<span class="t" style="top:504.19px;height:7.02px;line-height:7.02px;font-size:5.4px;color:#969696;left:26.6px;transform-origin:0 50%;transform:scale(1.1333,1.0000);">2</span>
<span class="t" style="top:510.39px;height:7.02px;line-height:7.02px;font-size:5.4px;color:#969696;left:26.6px;transform-origin:0 50%;transform:scale(1.1333,1.0000);">2</span>
<span class="t" style="top:516.59px;height:7.02px;line-height:7.02px;font-size:5.4px;color:#969696;left:26.6px;transform-origin:0 50%;transform:scale(1.1333,1.0000);">0</span>
<span class="t" style="top:522.79px;height:7.02px;line-height:7.02px;font-size:5.4px;color:#969696;left:26.6px;transform-origin:0 50%;transform:scale(1.1333,1.0000);">0</span>
<div style="left:26px;top:531.9px;width:10px;height:0.8px;background:#5c5c5c;"></div>
<div style="left:33px;top:539.1px;width:3px;height:0.6px;background:#585858;"></div>
<div style="left:31.5px;top:546.2px;width:4.5px;height:0.6px;background:#585858;"></div>
<div style="left:33px;top:553.4px;width:3px;height:0.6px;background:#585858;"></div>
<span class="t" style="top:532.99px;height:7.02px;line-height:7.02px;font-size:5.4px;color:#969696;left:26.6px;transform-origin:0 50%;transform:scale(1.1333,1.0000);">2</span>
<span class="t" style="top:539.19px;height:7.02px;line-height:7.02px;font-size:5.4px;color:#969696;left:26.6px;transform-origin:0 50%;transform:scale(1.1333,1.0000);">4</span>
<span class="t" style="top:545.39px;height:7.02px;line-height:7.02px;font-size:5.4px;color:#969696;left:26.6px;transform-origin:0 50%;transform:scale(1.1333,1.0000);">0</span>
<span class="t" style="top:551.59px;height:7.02px;line-height:7.02px;font-size:5.4px;color:#969696;left:26.6px;transform-origin:0 50%;transform:scale(1.1333,1.0000);">0</span>
<div style="left:26px;top:560.6px;width:10px;height:0.8px;background:#5c5c5c;"></div>
<div style="left:33px;top:567.8px;width:3px;height:0.6px;background:#585858;"></div>
<div style="left:31.5px;top:575.0px;width:4.5px;height:0.6px;background:#585858;"></div>
<div style="left:33px;top:582.2px;width:3px;height:0.6px;background:#585858;"></div>
<span class="t" style="top:561.69px;height:7.02px;line-height:7.02px;font-size:5.4px;color:#969696;left:26.6px;transform-origin:0 50%;transform:scale(1.1333,1.0000);">2</span>
<span class="t" style="top:567.89px;height:7.02px;line-height:7.02px;font-size:5.4px;color:#969696;left:26.6px;transform-origin:0 50%;transform:scale(1.1333,1.0000);">6</span>
<span class="t" style="top:574.09px;height:7.02px;line-height:7.02px;font-size:5.4px;color:#969696;left:26.6px;transform-origin:0 50%;transform:scale(1.1333,1.0000);">0</span>
<span class="t" style="top:580.29px;height:7.02px;line-height:7.02px;font-size:5.4px;color:#969696;left:26.6px;transform-origin:0 50%;transform:scale(1.1333,1.0000);">0</span>
<div style="left:26px;top:589.4px;width:10px;height:0.8px;background:#5c5c5c;"></div>
<div style="left:33px;top:596.5px;width:3px;height:0.6px;background:#585858;"></div>
<div style="left:31.5px;top:603.7px;width:4.5px;height:0.6px;background:#585858;"></div>
<div style="left:33px;top:610.9px;width:3px;height:0.6px;background:#585858;"></div>
<span class="t" style="top:590.49px;height:7.02px;line-height:7.02px;font-size:5.4px;color:#969696;left:26.6px;transform-origin:0 50%;transform:scale(1.1333,1.0000);">2</span>
<span class="t" style="top:596.69px;height:7.02px;line-height:7.02px;font-size:5.4px;color:#969696;left:26.6px;transform-origin:0 50%;transform:scale(1.1333,1.0000);">8</span>
<span class="t" style="top:602.89px;height:7.02px;line-height:7.02px;font-size:5.4px;color:#969696;left:26.6px;transform-origin:0 50%;transform:scale(1.1333,1.0000);">0</span>
<span class="t" style="top:609.09px;height:7.02px;line-height:7.02px;font-size:5.4px;color:#969696;left:26.6px;transform-origin:0 50%;transform:scale(1.1333,1.0000);">0</span>
<div style="left:26px;top:618.1px;width:10px;height:0.8px;background:#5c5c5c;"></div>
<div style="left:33px;top:625.3px;width:3px;height:0.6px;background:#585858;"></div>
<div style="left:31.5px;top:632.5px;width:4.5px;height:0.6px;background:#585858;"></div>
<div style="left:33px;top:639.7px;width:3px;height:0.6px;background:#585858;"></div>
<span class="t" style="top:619.19px;height:7.02px;line-height:7.02px;font-size:5.4px;color:#969696;left:26.6px;transform-origin:0 50%;transform:scale(1.1333,1.0000);">3</span>
<span class="t" style="top:625.39px;height:7.02px;line-height:7.02px;font-size:5.4px;color:#969696;left:26.6px;transform-origin:0 50%;transform:scale(1.1333,1.0000);">0</span>
<span class="t" style="top:631.59px;height:7.02px;line-height:7.02px;font-size:5.4px;color:#969696;left:26.6px;transform-origin:0 50%;transform:scale(1.1333,1.0000);">0</span>
<span class="t" style="top:637.79px;height:7.02px;line-height:7.02px;font-size:5.4px;color:#969696;left:26.6px;transform-origin:0 50%;transform:scale(1.1333,1.0000);">0</span>
<div style="left:26px;top:646.8px;width:10px;height:0.8px;background:#5c5c5c;"></div>
<div style="left:33px;top:654.0px;width:3px;height:0.6px;background:#585858;"></div>
<div style="left:31.5px;top:661.2px;width:4.5px;height:0.6px;background:#585858;"></div>
<div style="left:33px;top:668.4px;width:3px;height:0.6px;background:#585858;"></div>
<span class="t" style="top:647.89px;height:7.02px;line-height:7.02px;font-size:5.4px;color:#969696;left:26.6px;transform-origin:0 50%;transform:scale(1.1333,1.0000);">3</span>
<span class="t" style="top:654.09px;height:7.02px;line-height:7.02px;font-size:5.4px;color:#969696;left:26.6px;transform-origin:0 50%;transform:scale(1.1333,1.0000);">2</span>
<span class="t" style="top:660.29px;height:7.02px;line-height:7.02px;font-size:5.4px;color:#969696;left:26.6px;transform-origin:0 50%;transform:scale(1.1333,1.0000);">0</span>
<span class="t" style="top:666.49px;height:7.02px;line-height:7.02px;font-size:5.4px;color:#969696;left:26.6px;transform-origin:0 50%;transform:scale(1.1333,1.0000);">0</span>
<div style="left:26px;top:675.6px;width:10px;height:0.8px;background:#5c5c5c;"></div>
<div style="left:33px;top:682.8px;width:3px;height:0.6px;background:#585858;"></div>
<div style="left:31.5px;top:689.9px;width:4.5px;height:0.6px;background:#585858;"></div>
<div style="left:33px;top:697.1px;width:3px;height:0.6px;background:#585858;"></div>
<span class="t" style="top:676.69px;height:7.02px;line-height:7.02px;font-size:5.4px;color:#969696;left:26.6px;transform-origin:0 50%;transform:scale(1.1333,1.0000);">3</span>
<span class="t" style="top:682.89px;height:7.02px;line-height:7.02px;font-size:5.4px;color:#969696;left:26.6px;transform-origin:0 50%;transform:scale(1.1333,1.0000);">4</span>
<span class="t" style="top:689.09px;height:7.02px;line-height:7.02px;font-size:5.4px;color:#969696;left:26.6px;transform-origin:0 50%;transform:scale(1.1333,1.0000);">0</span>
<span class="t" style="top:695.29px;height:7.02px;line-height:7.02px;font-size:5.4px;color:#969696;left:26.6px;transform-origin:0 50%;transform:scale(1.1333,1.0000);">0</span>
<div style="left:26px;top:704.3px;width:10px;height:0.8px;background:#5c5c5c;"></div>
<span class="t" style="top:705.39px;height:7.02px;line-height:7.02px;font-size:5.4px;color:#969696;left:26.6px;transform-origin:0 50%;transform:scale(1.1333,1.0000);">3</span>
<span class="t" style="top:711.59px;height:7.02px;line-height:7.02px;font-size:5.4px;color:#969696;left:26.6px;transform-origin:0 50%;transform:scale(1.1333,1.0000);">6</span>
<span class="t" style="top:717.79px;height:7.02px;line-height:7.02px;font-size:5.4px;color:#969696;left:26.6px;transform-origin:0 50%;transform:scale(1.1333,1.0000);">0</span>
<span class="t" style="top:723.99px;height:7.02px;line-height:7.02px;font-size:5.4px;color:#969696;left:26.6px;transform-origin:0 50%;transform:scale(1.1333,1.0000);">0</span>
<div style="left:303.6px;top:187px;width:288.8px;height:410px;background-color:#fff;background-image:repeating-conic-gradient(#cbcbcb 0 25%,#ffffff 0 50%);background-size:10px 11.14px;background-position:0.4px 0px;"></div>
<div style="left:322.6px;top:72.5px;width:1.8px;height:639px;background:rgba(74,240,240,0.5);"></div>
<div style="left:571.6px;top:72.5px;width:1.8px;height:639px;background:rgba(74,240,240,0.5);"></div>
<div style="left:36px;top:209.7px;width:823px;height:1.9px;background:rgba(74,240,240,0.5);"></div>
<div style="left:36px;top:573.7px;width:823px;height:1.9px;background:rgba(74,240,240,0.5);"></div>
<div id="doc" style="left:389px;top:151px;width:302px;height:418px;background:#fff;overflow:hidden"></div>
<div style="left:25px;top:711.5px;width:845px;height:9px;background:#4a4a4a;"></div>
<div style="left:25px;top:711.5px;width:31px;height:9px;background:#3c3c3c;"></div>
<span class="t" style="top:712.45px;height:9.1px;line-height:9.1px;font-size:7px;color:#d8d8d8;left:30px;transform-origin:0 50%;transform:scale(0.8674,1.0000);">20.66%</span>
<span class="t" style="top:712.45px;height:9.1px;line-height:9.1px;font-size:7px;color:#cfcfcf;left:70.8px;transform-origin:0 50%;transform:scale(0.8802,1.0000);">2232 px x 2854 px (250 ppi)</span>
<span class="t" style="top:711.8px;height:10.4px;line-height:10.4px;font-size:8px;color:#cfcfcf;left:164.5px;transform-origin:0 50%;">›</span>
<svg style="left:400px;top:163px" width="60" height="60" viewBox="400 163 60 60">
<defs><clipPath id="lgc"><path d="M400 163 H460 V203 L452 208 H407 L400 203 Z"/></clipPath></defs>
<g clip-path="url(#lgc)">
<ellipse cx="429.3" cy="191.5" rx="25.2" ry="24.6" fill="#2d4c9f"/>
<ellipse cx="429.3" cy="191.5" rx="24" ry="23.4" fill="none" stroke="#e6ecf9" stroke-width="0.6"/>
<ellipse cx="429.7" cy="190.3" rx="14.6" ry="12.6" fill="#ffffff"/>
<ellipse cx="429.7" cy="190.3" rx="13" ry="11.1" fill="#f6f8fd" stroke="#3b59a8" stroke-width="0.7"/>
<g fill="none" stroke="#eef2fc" stroke-linecap="round">
<path d="M413.5 180.5 q0.500 -3 3 -2.500 q2.500 0.500 2 -2.500 q1 -3.500 4 -2.500 q1.500 1.500 3 -1.500 q2.500 -2.500 4.500 0.500" stroke-width="2.100"/>
<path d="M431.500 172 q2 -2.500 4 0 q1.500 2 3.500 0 q3 -0.500 3.500 2.500 q0.500 2.500 2.500 3 q1.500 1 1 3" stroke-width="2.100"/>
<path d="M415 175 q2 -3.500 5.500 -4.500 M423 169.800 h4.500 M430 168.800 q4 -0.300 7 1.700 M439.500 172 q2.500 1.500 4 4" stroke-width="1.300"/>
<path d="M418 178.500 l2 -1.500 M424.500 175.500 l1.500 -1 M434 175 l1.500 0.500 M440 178 l1.500 1.500" stroke-width="0.900"/>
<path d="M408.200 185 v11.500 M410.800 186 v10 M448 186 v10 M450.600 185 v11.500" stroke-width="1.700" stroke-dasharray="1.700 0.900" stroke-linecap="butt"/>
</g>
<g fill="none" stroke="#3f5cab" stroke-width="0.900">
<path d="M420.500 188 q1.500 -3.500 4 -3.500 q1.500 -2.500 3 0 q1.500 -3 3 -0.500 q1.500 -2 3 0.500 q3 0 4.500 3.500"/>
<path d="M423 186.500 l2 4 M427 184 l1 6.500 M431 184 l-0.500 6.500 M435.500 186 l-2 4.500 M422 191 q7.500 2 15 0"/>
<path d="M424 193.500 h11 M425.500 195.500 h8 M423.500 197.500 h12" stroke-width="0.900"/>
<path d="M419.500 190 l1.500 3 M439.500 190 l-1.500 3 M421 183 l1.500 1.500 M438 183 l-1.500 1.500"/>
</g>
</g>
<g transform="translate(0 210) scale(1 1.17) translate(0 -210)">
<path d="M404.500 208.500 q1 -3.500 5.500 -4 q5 -3.500 10 -1.500 q4.500 -3.500 9.500 1 q5 -4.500 9.500 -1 q5 -2 10 1.500 q4.500 0.500 5.500 4 l-3 3 h-44 z" fill="#f7f9fe" stroke="#5672bb" stroke-width="0.750"/>
<path d="M410 207 q5 -3.500 10 -1.500 q5 1 9.500 4 q4.500 -3 9.500 -4 q5 -2 10 1.500 M414 208.500 q8 -3.500 15.500 1 q7.500 -4.500 15.500 -1" fill="none" stroke="#7e95cf" stroke-width="0.550"/>
<path d="M403.800 210 q2 -1.800 4.700 -0.800 h42 q2.700 -1 4.700 0.800 q1.600 3.700 -0.600 7 q-2.800 2 -5.600 0.400 q-19.500 2.400 -39 0 q-2.800 1.600 -5.600 -0.400 q-2.200 -3.300 -0.600 -7 z" fill="#ffffff" stroke="#3554a8" stroke-width="0.950"/>
<path d="M409.500 210.600 h40 M411 217.100 q18.500 1.900 37 0" fill="none" stroke="#6a84c5" stroke-width="0.500"/>
<path d="M405.300 211.800 q2.600 1.200 1.200 4.400 q-1.400 1.200 -2.200 -0.400 M453.700 211.800 q-2.600 1.200 -1.200 4.400 q1.400 1.200 2.200 -0.400" fill="none" stroke="#5d79bf" stroke-width="0.600"/>
<text x="429.7" y="213.800" font-family="Liberation Sans, sans-serif" font-size="3.100" font-weight="bold" fill="#4361af" text-anchor="middle" textLength="31" lengthAdjust="spacingAndGlyphs">DA AFGHANISTAN</text>
<text x="429.700" y="217" font-family="Liberation Sans, sans-serif" font-size="2.500" font-weight="bold" fill="#4361af" text-anchor="middle" textLength="9" lengthAdjust="spacingAndGlyphs">BANK</text>
</g>
</svg>
<span class="t" style="top:234.0px;height:13.0px;line-height:13.0px;font-size:10px;color:#2a2a2a;font-weight:bold;left:407.9px;transform-origin:0 50%;transform:scale(0.3658,0.4190);">COMPANY NAME: FORMONIX</span>
<span class="t" style="top:245.3px;height:13.0px;line-height:13.0px;font-size:10px;color:#2a2a2a;font-weight:bold;left:407.9px;transform-origin:0 50%;transform:scale(0.3592,0.4190);">ADDRESS: WEST Link House,</span>
<span class="t" style="top:250.5px;height:13.0px;line-height:13.0px;font-size:10px;color:#2a2a2a;font-weight:bold;left:407.9px;transform-origin:0 50%;transform:scale(0.3619,0.4190);">501 Great West Rd, Brentford TW8 9DN</span>
<span class="t" style="top:261.6px;height:13.0px;line-height:13.0px;font-size:10px;color:#2a2a2a;font-weight:bold;left:407.9px;transform-origin:0 50%;transform:scale(0.3656,0.4190);">ZIPCODE: FL 457844</span>
<span class="t" style="top:169.1px;height:13.0px;line-height:13.0px;font-size:10px;color:#2b4696;font-weight:bold;left:576.1px;transform-origin:0 50%;transform:scale(1.0889,1.1732);">Business Account</span>
<span class="t" style="top:183.0px;height:13.0px;line-height:13.0px;font-size:10px;color:#2b4696;font-weight:bold;left:618.5px;transform-origin:0 50%;transform:scale(1.0794,1.1173);">Statement</span>
<span class="t" style="top:192.5px;height:13.0px;line-height:13.0px;font-size:10px;color:#2a2a2a;font-weight:bold;left:586px;transform-origin:0 50%;transform:scale(0.4058,0.4469);">Address: Ibni-Sina Watt, Kabul, Afghanistan</span>
<span class="t" style="top:199.2px;height:13.0px;line-height:13.0px;font-size:10px;color:#2a2a2a;font-weight:bold;left:622.4px;transform-origin:0 50%;transform:scale(0.4167,0.4469);">Phone:  +93 (20) 2104146</span>
<div style="left:538.4px;top:216.8px;width:137.6px;height:67.5px;background:#d8e5f3;border-radius:4px;box-shadow:0 0 1.5px #d8e5f3;"></div>
<div style="left:540.5px;top:219.2px;width:133.5px;height:0.6px;background:#484d62;"></div>
<span class="t" style="top:217.7px;height:13.0px;line-height:13.0px;font-size:10px;color:#1c1c1c;font-weight:bold;left:541px;transform-origin:0 50%;transform:scale(0.4871,0.6425);">ACCOUNT SUMMARY</span>
<span class="t" style="top:223.7px;height:13.0px;line-height:13.0px;font-size:10px;color:#2a2a2a;font-weight:bold;left:541px;transform-origin:0 50%;transform:scale(0.2237,0.3911);">BIC:</span>
<span class="t" style="top:223.7px;height:13.0px;line-height:13.0px;font-size:10px;color:#2a2a2a;font-weight:bold;left:578.7px;transform-origin:0 50%;transform:scale(0.3246,0.3911);">MYMBGB2M</span>
<span class="t" style="top:228.4px;height:13.0px;line-height:13.0px;font-size:10px;color:#2a2a2a;font-weight:bold;left:541px;transform-origin:0 50%;transform:scale(0.2340,0.3911);">IBAN:</span>
<span class="t" style="top:228.4px;height:13.0px;line-height:13.0px;font-size:10px;color:#2a2a2a;font-weight:bold;left:578.7px;transform-origin:0 50%;transform:scale(0.3218,0.3911);">GB53MYMB23058038353433</span>
<span class="t" style="top:233.8px;height:13.0px;line-height:13.0px;font-size:10px;color:#2a2a2a;font-weight:bold;left:541px;transform-origin:0 50%;transform:scale(0.3109,0.3911);">Account no.:</span>
<span class="t" style="top:233.8px;height:13.0px;line-height:13.0px;font-size:10px;color:#2a2a2a;font-weight:bold;left:578.7px;transform-origin:0 50%;transform:scale(0.3551,0.3911);">12349755</span>
<span class="t" style="top:238.5px;height:13.0px;line-height:13.0px;font-size:10px;color:#2a2a2a;font-weight:bold;left:541px;transform-origin:0 50%;transform:scale(0.3228,0.3911);">Sort Code:</span>
<span class="t" style="top:238.5px;height:13.0px;line-height:13.0px;font-size:10px;color:#2a2a2a;font-weight:bold;left:578.7px;transform-origin:0 50%;transform:scale(0.3256,0.3911);">23/05/1800</span>
<span class="t" style="top:243.1px;height:13.0px;line-height:13.0px;font-size:10px;color:#2a2a2a;font-weight:bold;left:541px;transform-origin:0 50%;transform:scale(0.3097,0.3911);">Statement No:</span>
<span class="t" style="top:243.1px;height:13.0px;line-height:13.0px;font-size:10px;color:#2a2a2a;font-weight:bold;left:578.7px;transform-origin:0 50%;transform:scale(0.3416,0.3911);">58</span>
<div style="left:540.5px;top:252.1px;width:133.5px;height:0.6px;background:#484d62;"></div>
<div style="left:540.5px;top:257.1px;width:133.5px;height:0.6px;background:#484d62;"></div>
<div style="left:540.5px;top:262.7px;width:133.5px;height:0.6px;background:#484d62;"></div>
<div style="left:540.5px;top:268.2px;width:133.5px;height:0.6px;background:#484d62;"></div>
<div style="left:540.5px;top:273.7px;width:133.5px;height:0.6px;background:#484d62;"></div>
<div style="left:540.5px;top:279.1px;width:133.5px;height:0.6px;background:#484d62;"></div>
<span class="t" style="top:248.4px;height:13.0px;line-height:13.0px;font-size:10px;color:#2a2a2a;font-weight:bold;left:541px;transform-origin:0 50%;transform:scale(0.2450,0.3911);">Current Statement Period:</span>
<span class="t" style="top:248.4px;height:13.0px;line-height:13.0px;font-size:10px;color:#2a2a2a;font-weight:bold;left:628.3px;transform-origin:0 50%;transform:scale(0.3287,0.3911);">01 JUN 2020 – 30 JUN 2020</span>
<span class="t" style="top:253.8px;height:13.0px;line-height:13.0px;font-size:10px;color:#2a2a2a;font-weight:bold;left:541px;transform-origin:0 50%;transform:scale(0.3058,0.3911);">Opening Balance:</span>
<span class="t" style="top:253.8px;height:13.0px;line-height:13.0px;font-size:10px;color:#2a2a2a;font-weight:bold;left:656px;transform-origin:0 50%;transform:scale(0.3346,0.3911);">37,756.11</span>
<span class="t" style="top:259.3px;height:13.0px;line-height:13.0px;font-size:10px;color:#2a2a2a;font-weight:bold;left:541px;transform-origin:0 50%;transform:scale(0.3151,0.3911);">Total Money Out:</span>
<span class="t" style="top:259.3px;height:13.0px;line-height:13.0px;font-size:10px;color:#2a2a2a;font-weight:bold;left:656px;transform-origin:0 50%;transform:scale(0.3303,0.3911);">15,095.10</span>
<span class="t" style="top:264.7px;height:13.0px;line-height:13.0px;font-size:10px;color:#2a2a2a;font-weight:bold;left:541px;transform-origin:0 50%;transform:scale(0.3237,0.3911);">Total Money In:</span>
<span class="t" style="top:264.7px;height:13.0px;line-height:13.0px;font-size:10px;color:#2a2a2a;font-weight:bold;left:656px;transform-origin:0 50%;transform:scale(0.3303,0.3911);">14,432.10</span>
<span class="t" style="top:270.2px;height:13.0px;line-height:13.0px;font-size:10px;color:#2a2a2a;font-weight:bold;left:541px;transform-origin:0 50%;transform:scale(0.3143,0.3911);">Closing Balance:</span>
<span class="t" style="top:270.2px;height:13.0px;line-height:13.0px;font-size:10px;color:#2a2a2a;font-weight:bold;left:656px;transform-origin:0 50%;transform:scale(0.3346,0.3911);">36,964.11</span>
<div style="left:537.7px;top:286.7px;width:138.3px;height:53.3px;background:#d8e5f3;border-radius:4px;box-shadow:0 0 1.5px #d8e5f3;"></div>
<div style="left:541.3px;top:289.4px;width:132.2px;height:0.6px;background:#484d62;"></div>
<span class="t" style="top:286.2px;height:13.0px;line-height:13.0px;font-size:10px;color:#2a2a2a;font-weight:bold;left:543px;transform-origin:0 50%;transform:scale(0.3616,0.4330);">OVERDRAFT INTEREST &amp; CHARGES*</span>
<span class="t" style="top:291.0px;height:13.0px;line-height:13.0px;font-size:10px;color:#2a2a2a;font-weight:bold;left:543px;transform-origin:0 50%;transform:scale(0.3231,0.3911);">Arranged Overdraft Limit:</span>
<span class="t" style="top:291.0px;height:13.0px;line-height:13.0px;font-size:10px;color:#2a2a2a;font-weight:bold;left:664.5px;transform-origin:0 50%;transform:scale(0.3185,0.3911);">0.00</span>
<span class="t" style="top:295.7px;height:13.0px;line-height:13.0px;font-size:10px;color:#2a2a2a;font-weight:bold;left:543px;transform-origin:0 50%;transform:scale(0.3227,0.3911);">Overdraft Rate of Interest**:</span>
<span class="t" style="top:295.7px;height:13.0px;line-height:13.0px;font-size:10px;color:#2a2a2a;font-weight:bold;left:640px;transform-origin:0 50%;transform:scale(0.3249,0.3911);">19.89% (per annum)</span>
<span class="t" style="top:301.2px;height:13.0px;line-height:13.0px;font-size:10px;color:#2a2a2a;font-weight:bold;left:543px;transform-origin:0 50%;transform:scale(0.3197,0.3911);">Arranged Overdraft Interest:</span>
<span class="t" style="top:301.2px;height:13.0px;line-height:13.0px;font-size:10px;color:#2a2a2a;font-weight:bold;left:664.5px;transform-origin:0 50%;transform:scale(0.3185,0.3911);">0.00</span>
<span class="t" style="top:306.5px;height:13.0px;line-height:13.0px;font-size:10px;color:#2a2a2a;font-weight:bold;left:543px;transform-origin:0 50%;transform:scale(0.3216,0.3911);">Unarranged Overdraft Interest:</span>
<span class="t" style="top:306.5px;height:13.0px;line-height:13.0px;font-size:10px;color:#2a2a2a;font-weight:bold;left:664.5px;transform-origin:0 50%;transform:scale(0.3185,0.3911);">0.00</span>
<span class="t" style="top:311.8px;height:13.0px;line-height:13.0px;font-size:10px;color:#2a2a2a;font-weight:bold;left:543px;transform-origin:0 50%;transform:scale(0.3199,0.3911);">Unarranged Overdraft Charges:</span>
<span class="t" style="top:311.8px;height:13.0px;line-height:13.0px;font-size:10px;color:#2a2a2a;font-weight:bold;left:664.5px;transform-origin:0 50%;transform:scale(0.3185,0.3911);">0.00</span>
<span class="t" style="top:317.5px;height:13.0px;line-height:13.0px;font-size:10px;color:#2a2a2a;font-weight:bold;left:543px;transform-origin:0 50%;transform:scale(0.3216,0.3911);">Total Interest &amp; Charges:</span>
<span class="t" style="top:317.5px;height:13.0px;line-height:13.0px;font-size:10px;color:#2a2a2a;font-weight:bold;left:664.5px;transform-origin:0 50%;transform:scale(0.3185,0.3911);">0.00</span>
<span class="t" style="top:323.0px;height:13.0px;line-height:13.0px;font-size:10px;color:#2a2a2a;font-weight:bold;left:543px;transform-origin:0 50%;transform:scale(0.3214,0.3911);">Unarranged Overdraft Interest Waived:</span>
<span class="t" style="top:323.0px;height:13.0px;line-height:13.0px;font-size:10px;color:#2a2a2a;font-weight:bold;left:664.5px;transform-origin:0 50%;transform:scale(0.3185,0.3911);">0.00</span>
<span class="t" style="top:328.2px;height:13.0px;line-height:13.0px;font-size:10px;color:#2a2a2a;font-weight:bold;left:543px;transform-origin:0 50%;transform:scale(0.3227,0.3911);">Total Interest &amp; Charges Payable***:</span>
<span class="t" style="top:328.2px;height:13.0px;line-height:13.0px;font-size:10px;color:#2a2a2a;font-weight:bold;left:664.5px;transform-origin:0 50%;transform:scale(0.3185,0.3911);">0.00</span>
<div style="left:541.3px;top:304.7px;width:132.2px;height:0.6px;background:#484d62;"></div>
<div style="left:541.3px;top:310.0px;width:132.2px;height:0.6px;background:#484d62;"></div>
<div style="left:541.3px;top:315.4px;width:132.2px;height:0.6px;background:#484d62;"></div>
<div style="left:541.3px;top:320.9px;width:132.2px;height:0.6px;background:#484d62;"></div>
<div style="left:541.3px;top:326.4px;width:132.2px;height:0.6px;background:#484d62;"></div>
<div style="left:541.3px;top:331.7px;width:132.2px;height:0.6px;background:#484d62;"></div>
<div style="left:541.3px;top:337.0px;width:132.2px;height:0.6px;background:#484d62;"></div>
<span class="t" style="top:363.1px;height:13.0px;line-height:13.0px;font-size:10px;color:#1c1c1c;left:407.4px;transform-origin:0 50%;transform:scale(0.4440,0.5307);">ACCOUNT:</span>
<span class="t" style="top:363.1px;height:13.0px;line-height:13.0px;font-size:10px;color:#000;font-weight:bold;left:433px;transform-origin:0 50%;transform:scale(0.5975,0.5447);">FORMONIX</span>
<div style="left:404.6px;top:374.4px;width:270.9px;height:10px;background:#1d3989;border-radius:5px;"></div>
<span class="t" style="top:372.9px;height:13.0px;line-height:13.0px;font-size:10px;color:#fff;font-weight:bold;left:407.5px;transform-origin:0 50%;transform:scale(0.4579,0.4469);">Transactions History</span>
<span class="t" style="top:383.8px;height:13.0px;line-height:13.0px;font-size:10px;color:#333;font-weight:bold;left:407.5px;transform-origin:0 50%;transform:scale(0.5097,0.5447);">DATE</span>
<span class="t" style="top:383.8px;height:13.0px;line-height:13.0px;font-size:10px;color:#333;font-weight:bold;left:443.9px;transform-origin:0 50%;transform:scale(0.4823,0.5447);">TRANSACTION</span>
<span class="t" style="top:383.8px;height:13.0px;line-height:13.0px;font-size:10px;color:#333;font-weight:bold;left:559.2px;transform-origin:0 50%;transform:scale(0.4968,0.5447);">MONEY OUT</span>
<span class="t" style="top:383.8px;height:13.0px;line-height:13.0px;font-size:10px;color:#333;font-weight:bold;left:607px;transform-origin:0 50%;transform:scale(0.4870,0.5447);">MONEY IN</span>
<span class="t" style="top:383.8px;height:13.0px;line-height:13.0px;font-size:10px;color:#333;font-weight:bold;left:646.6px;transform-origin:0 50%;transform:scale(0.4909,0.5447);">BALANCE</span>
<div style="left:405px;top:395.8px;width:267.8px;height:0.8px;background:#8c9ad2;"></div>
<span class="t" style="top:395.3px;height:13.0px;line-height:13.0px;font-size:10px;color:#1c1c1c;font-weight:bold;left:407.5px;transform-origin:0 50%;transform:scale(0.3658,0.4190);">Balance brought forward</span>
<span class="t" style="top:395.3px;height:13.0px;line-height:13.0px;font-size:10px;color:#1c1c1c;font-weight:bold;left:652px;transform-origin:0 50%;transform:scale(0.3758,0.4190);">£37,756.11</span>
<div style="left:405px;top:407.1px;width:267.8px;height:10.2px;background:#dbe7f5;"></div>
<div style="left:405px;top:432.2px;width:267.8px;height:11.1px;background:#dbe7f5;"></div>
<div style="left:405px;top:453.8px;width:267.8px;height:14.4px;background:#dbe7f5;"></div>
<div style="left:405px;top:477.8px;width:267.8px;height:14.4px;background:#dbe7f5;"></div>
<div style="left:405px;top:406.75px;width:267.8px;height:0.7px;background:#3f5fae;"></div>
<div style="left:405px;top:416.95px;width:267.8px;height:0.7px;background:#3f5fae;"></div>
<div style="left:405px;top:431.85px;width:267.8px;height:0.7px;background:#3f5fae;"></div>
<div style="left:405px;top:442.95px;width:267.8px;height:0.7px;background:#3f5fae;"></div>
<div style="left:405px;top:453.45px;width:267.8px;height:0.7px;background:#3f5fae;"></div>
<div style="left:405px;top:467.85px;width:267.8px;height:0.7px;background:#3f5fae;"></div>
<div style="left:405px;top:477.45px;width:267.8px;height:0.7px;background:#3f5fae;"></div>
<div style="left:405px;top:491.85px;width:267.8px;height:0.7px;background:#3f5fae;"></div>
<div style="left:405px;top:507.65px;width:267.8px;height:1.5px;background:#4f60b2;"></div>
<span class="t" style="top:405.7px;height:13.0px;line-height:13.0px;font-size:10px;color:#2a2a2a;font-weight:bold;left:407.5px;transform-origin:0 50%;transform:scale(0.3580,0.3771);">01 JUN 2020</span>
<span class="t" style="top:405.7px;height:13.0px;line-height:13.0px;font-size:10px;color:#2a2a2a;font-weight:bold;left:443.9px;transform-origin:0 50%;transform:scale(0.3319,0.3771);">Inward Payments</span>
<span class="t" style="top:405.7px;height:13.0px;line-height:13.0px;font-size:10px;color:#2a2a2a;font-weight:bold;left:620.3px;transform-origin:0 50%;transform:scale(0.3497,0.3771);">300.15</span>
<span class="t" style="top:405.7px;height:13.0px;line-height:13.0px;font-size:10px;color:#2a2a2a;font-weight:bold;left:654.8px;transform-origin:0 50%;transform:scale(0.3551,0.3771);">38,156.26</span>
<span class="t" style="top:418.6px;height:13.0px;line-height:13.0px;font-size:10px;color:#2a2a2a;font-weight:bold;left:407.5px;transform-origin:0 50%;transform:scale(0.3580,0.3771);">02 JUN 2020</span>
<span class="t" style="top:415.7px;height:13.0px;line-height:13.0px;font-size:10px;color:#2a2a2a;font-weight:bold;left:443.9px;transform-origin:0 50%;transform:scale(0.3481,0.3771);">Card Purchase 02/06/20 09:15:48</span>
<span class="t" style="top:421.3px;height:13.0px;line-height:13.0px;font-size:10px;color:#2a2a2a;font-weight:bold;left:443.9px;transform-origin:0 50%;transform:scale(0.3569,0.3771);">STAPLES</span>
<span class="t" style="top:418.6px;height:13.0px;line-height:13.0px;font-size:10px;color:#2a2a2a;font-weight:bold;left:578.1px;transform-origin:0 50%;transform:scale(0.3628,0.3771);">312.48</span>
<span class="t" style="top:418.6px;height:13.0px;line-height:13.0px;font-size:10px;color:#2a2a2a;font-weight:bold;left:654.8px;transform-origin:0 50%;transform:scale(0.3551,0.3771);">37,523.78</span>
<span class="t" style="top:431.3px;height:13.0px;line-height:13.0px;font-size:10px;color:#2a2a2a;font-weight:bold;left:407.5px;transform-origin:0 50%;transform:scale(0.3580,0.3771);">02 JUN 2020</span>
<span class="t" style="top:431.3px;height:13.0px;line-height:13.0px;font-size:10px;color:#2a2a2a;font-weight:bold;left:443.9px;transform-origin:0 50%;transform:scale(0.3368,0.3771);">Inward Payments Douglas Rubio</span>
<span class="t" style="top:431.3px;height:13.0px;line-height:13.0px;font-size:10px;color:#2a2a2a;font-weight:bold;left:617.2px;transform-origin:0 50%;transform:scale(0.3544,0.3771);">2,835.18</span>
<span class="t" style="top:431.3px;height:13.0px;line-height:13.0px;font-size:10px;color:#2a2a2a;font-weight:bold;left:654.8px;transform-origin:0 50%;transform:scale(0.3551,0.3771);">40,665.05</span>
<span class="t" style="top:441.7px;height:13.0px;line-height:13.0px;font-size:10px;color:#2a2a2a;font-weight:bold;left:407.5px;transform-origin:0 50%;transform:scale(0.3580,0.3771);">03 JUN 2020</span>
<span class="t" style="top:441.7px;height:13.0px;line-height:13.0px;font-size:10px;color:#2a2a2a;font-weight:bold;left:443.9px;transform-origin:0 50%;transform:scale(0.3376,0.3771);">Outward Fast Payments Jennifer Labelle</span>
<span class="t" style="top:441.7px;height:13.0px;line-height:13.0px;font-size:10px;color:#2a2a2a;font-weight:bold;left:578.1px;transform-origin:0 50%;transform:scale(0.3628,0.3771);">567.59</span>
<span class="t" style="top:441.7px;height:13.0px;line-height:13.0px;font-size:10px;color:#2a2a2a;font-weight:bold;left:654.8px;transform-origin:0 50%;transform:scale(0.3551,0.3771);">40,066.54</span>
<span class="t" style="top:454.6px;height:13.0px;line-height:13.0px;font-size:10px;color:#2a2a2a;font-weight:bold;left:407.5px;transform-origin:0 50%;transform:scale(0.3580,0.3771);">03 JUN 2020</span>
<span class="t" style="top:451.7px;height:13.0px;line-height:13.0px;font-size:10px;color:#2a2a2a;font-weight:bold;left:443.9px;transform-origin:0 50%;transform:scale(0.3573,0.3771);">Card Purchase 03/06/20 11:15:48 FRANKS</span>
<span class="t" style="top:457.1px;height:13.0px;line-height:13.0px;font-size:10px;color:#2a2a2a;font-weight:bold;left:443.9px;transform-origin:0 50%;transform:scale(0.3560,0.3771);">NURSERY &amp; CRAFTS</span>
<span class="t" style="top:454.6px;height:13.0px;line-height:13.0px;font-size:10px;color:#2a2a2a;font-weight:bold;left:578.1px;transform-origin:0 50%;transform:scale(0.3628,0.3771);">102.15</span>
<span class="t" style="top:454.6px;height:13.0px;line-height:13.0px;font-size:10px;color:#2a2a2a;font-weight:bold;left:654.8px;transform-origin:0 50%;transform:scale(0.3551,0.3771);">39,964.13</span>
<span class="t" style="top:465.9px;height:13.0px;line-height:13.0px;font-size:10px;color:#2a2a2a;font-weight:bold;left:407.5px;transform-origin:0 50%;transform:scale(0.3580,0.3771);">05 JUN 2020</span>
<span class="t" style="top:465.9px;height:13.0px;line-height:13.0px;font-size:10px;color:#2a2a2a;font-weight:bold;left:443.9px;transform-origin:0 50%;transform:scale(0.3491,0.3771);">Outward Fast Payments MARGOLIS FURNITURE</span>
<span class="t" style="top:465.9px;height:13.0px;line-height:13.0px;font-size:10px;color:#2a2a2a;font-weight:bold;left:575px;transform-origin:0 50%;transform:scale(0.3647,0.3771);">2,502.52</span>
<span class="t" style="top:465.9px;height:13.0px;line-height:13.0px;font-size:10px;color:#2a2a2a;font-weight:bold;left:654.8px;transform-origin:0 50%;transform:scale(0.3551,0.3771);">37,461.67</span>
<span class="t" style="top:478.4px;height:13.0px;line-height:13.0px;font-size:10px;color:#2a2a2a;font-weight:bold;left:407.5px;transform-origin:0 50%;transform:scale(0.3580,0.3771);">05 JUN 2020</span>
<span class="t" style="top:475.9px;height:13.0px;line-height:13.0px;font-size:10px;color:#2a2a2a;font-weight:bold;left:443.9px;transform-origin:0 50%;transform:scale(0.3481,0.3771);">Card Purchase 05/06/20 12:15:48</span>
<span class="t" style="top:481.7px;height:13.0px;line-height:13.0px;font-size:10px;color:#2a2a2a;font-weight:bold;left:443.9px;transform-origin:0 50%;transform:scale(0.3683,0.3771);">IKEA EDMONTON</span>
<span class="t" style="top:478.4px;height:13.0px;line-height:13.0px;font-size:10px;color:#2a2a2a;font-weight:bold;left:578.1px;transform-origin:0 50%;transform:scale(0.3628,0.3771);">164.35</span>
<span class="t" style="top:478.4px;height:13.0px;line-height:13.0px;font-size:10px;color:#2a2a2a;font-weight:bold;left:654.8px;transform-origin:0 50%;transform:scale(0.3551,0.3771);">37,297.32</span>
<span class="t" style="top:490.8px;height:13.0px;line-height:13.0px;font-size:10px;color:#2a2a2a;font-weight:bold;left:407.5px;transform-origin:0 50%;transform:scale(0.3580,0.3771);">06 JUN 2020</span>
<span class="t" style="top:490.8px;height:13.0px;line-height:13.0px;font-size:10px;color:#2a2a2a;font-weight:bold;left:443.9px;transform-origin:0 50%;transform:scale(0.3377,0.3771);">Outward Fast Payments Screwfix Enfield</span>
<span class="t" style="top:490.8px;height:13.0px;line-height:13.0px;font-size:10px;color:#2a2a2a;font-weight:bold;left:580.5px;transform-origin:0 50%;transform:scale(0.3476,0.3771);">85.20</span>
<span class="t" style="top:490.8px;height:13.0px;line-height:13.0px;font-size:10px;color:#2a2a2a;font-weight:bold;left:654.8px;transform-origin:0 50%;transform:scale(0.3551,0.3771);">37,212.12</span>
<div style="left:0px;top:41px;width:25px;height:679px;background:#535353;"></div>
<div style="left:0px;top:41px;width:25px;height:7.5px;background:#424242;"></div>
<div style="left:0px;top:41px;width:1.5px;height:679px;background:#454545;"></div>
<div style="left:24.5px;top:41px;width:1.5px;height:679px;background:#3c3c3c;"></div>
<svg style="left:3.8px;top:43.2px" width="4.6" height="3.800" viewBox="0 0 6 4.400"><path d="M0.3 0.2 L2.5 2.200 L0.3 4.200 Z M3.3 0.2 L5.5 2.200 L3.300 4.200 Z" fill="#cfcfcf"/></svg>
<div style="left:6px;top:52.5px;width:13px;height:1px;background:#474747;"></div>
<div style="left:6px;top:54.5px;width:13px;height:1px;background:#474747;"></div>
<div style="left:3px;top:62.2px;width:18.7px;height:15.4px;background:#2f2f2f;border-radius:1px;"></div>
<svg style="left:6.300000000000001px;top:63.7px" width="12" height="12.6" viewBox="0 0 14 14"><g transform="translate(1.5,1.5) scale(1.1)"><path d="M5 0 L6.8 2.2 H5.5 V4.5 H7.8 V3.2 L10 5 L7.8 6.8 V5.5 H5.5 V7.8 H6.8 L5 10 L3.2 7.8 H4.5 V5.5 H2.2 V6.8 L0 5 L2.2 3.2 V4.5 H4.5 V2.2 H3.2 Z" fill="#e8e8e8"/></g></svg>
<svg style="left:19.2px;top:75.2px" width="2.4" height="2.4" viewBox="0 0 2.4 2.4"><path d="M2.4 0 V2.4 H0 Z" fill="#b8b8b8"/></svg>
<svg style="left:6.300000000000001px;top:81.0px" width="12" height="12.6" viewBox="0 0 14 14"><rect x="1.5" y="2.500" width="11" height="9" fill="none" stroke="#e2e2e2" stroke-width="1.2" stroke-dasharray="2 1.3"/></svg>
<svg style="left:19.2px;top:92.5px" width="2.4" height="2.4" viewBox="0 0 2.4 2.4"><path d="M2.4 0 V2.4 H0 Z" fill="#b8b8b8"/></svg>
<svg style="left:6.300000000000001px;top:99.2px" width="12" height="12.6" viewBox="0 0 14 14"><path d="M2 3 L6 6 L11.500 1.500 L10.500 8 Q8 11.500 4 10 L2 12.500 M4 10 Q5 7.500 8.500 8" fill="none" stroke="#e2e2e2" stroke-width="1.3"/></svg>
<svg style="left:19.2px;top:110.7px" width="2.4" height="2.4" viewBox="0 0 2.4 2.4"><path d="M2.4 0 V2.4 H0 Z" fill="#b8b8b8"/></svg>
<svg style="left:6.300000000000001px;top:116.9px" width="12" height="12.6" viewBox="0 0 14 14"><rect x="1.5" y="1.500" width="8" height="8" fill="none" stroke="#e2e2e2" stroke-width="1" stroke-dasharray="1.5 1"/><rect x="3.5" y="3.500" width="4" height="4" fill="#e2e2e2"/><path d="M7.500 7 L12.500 10 L10.200 10.600 L9.400 13 Z" fill="#e2e2e2"/></svg>
<svg style="left:19.2px;top:128.4px" width="2.4" height="2.4" viewBox="0 0 2.4 2.4"><path d="M2.4 0 V2.4 H0 Z" fill="#b8b8b8"/></svg>
<svg style="left:6.300000000000001px;top:134.2px" width="12" height="12.6" viewBox="0 0 14 14"><path d="M3.500 0.500 V10.500 H13.500 M0.500 3.500 H10.500 V13.500" fill="none" stroke="#e2e2e2" stroke-width="1.500"/></svg>
<svg style="left:19.2px;top:145.7px" width="2.4" height="2.4" viewBox="0 0 2.4 2.4"><path d="M2.4 0 V2.4 H0 Z" fill="#b8b8b8"/></svg>
<svg style="left:6.300000000000001px;top:153.0px" width="12" height="12.6" viewBox="0 0 14 14"><rect x="2" y="2" width="10" height="10" fill="none" stroke="#e2e2e2" stroke-width="1.3"/><path d="M2 2 L12 12 M12 2 L2 12" stroke="#e2e2e2" stroke-width="1"/></svg>
<svg style="left:6.300000000000001px;top:171.39999999999998px" width="12" height="12.6" viewBox="0 0 14 14"><path d="M2 12 L3 9 L8 4 L10 6 L5 11 Z" fill="#e2e2e2"/><path d="M7.500 3 L11 6.500 M9 4.500 L11.500 2 Q12.500 1.500 12.500 3 L10.500 5.500" fill="none" stroke="#e2e2e2" stroke-width="1.800"/></svg>
<svg style="left:19.2px;top:182.89999999999998px" width="2.4" height="2.4" viewBox="0 0 2.4 2.4"><path d="M2.4 0 V2.4 H0 Z" fill="#b8b8b8"/></svg>
<svg style="left:6.300000000000001px;top:189.39999999999998px" width="12" height="12.6" viewBox="0 0 14 14"><rect x="-1" y="4.300" width="16" height="5.600" rx="2.500" fill="#e2e2e2" transform="rotate(-45 7 7)"/><path d="M5.500 7 h0.100 M7 5.500 h0.100 M7 8.500 h0.100 M8.500 7 h0.100" stroke="#535353" stroke-width="1" stroke-linecap="round"/></svg>
<svg style="left:19.2px;top:200.89999999999998px" width="2.4" height="2.4" viewBox="0 0 2.4 2.4"><path d="M2.4 0 V2.4 H0 Z" fill="#b8b8b8"/></svg>
<svg style="left:6.300000000000001px;top:207.7px" width="12" height="12.6" viewBox="0 0 14 14"><path d="M12.500 1 Q13.500 1.500 13 2.500 L7.500 9 L5.500 7.500 Z" fill="#e2e2e2"/><path d="M5 8.500 L6.800 10 Q6 13 1.500 13 Q3.500 11.500 3.500 10 Q3.800 8.500 5 8.500 Z" fill="#e2e2e2"/></svg>
<svg style="left:19.2px;top:219.2px" width="2.4" height="2.4" viewBox="0 0 2.4 2.4"><path d="M2.4 0 V2.4 H0 Z" fill="#b8b8b8"/></svg>
<svg style="left:6.300000000000001px;top:226.0px" width="12" height="12.6" viewBox="0 0 14 14"><path d="M5.500 1.500 h3 l-0.500 4.500 h3.500 v3 h-9 v-3 h3.500 Z" fill="#e2e2e2"/><rect x="2" y="10.500" width="10" height="2" fill="#e2e2e2"/></svg>
<svg style="left:19.2px;top:237.5px" width="2.4" height="2.4" viewBox="0 0 2.4 2.4"><path d="M2.4 0 V2.4 H0 Z" fill="#b8b8b8"/></svg>
<svg style="left:6.300000000000001px;top:243.7px" width="12" height="12.6" viewBox="0 0 14 14"><path d="M12.500 1 Q13.500 1.500 13 2.500 L8.500 8 L6.800 6.600 Z" fill="#e2e2e2"/><path d="M6.300 7.500 L7.800 8.800 Q7 11.500 3.500 11.500 Q5 10.300 5 9 Q5.300 7.500 6.300 7.500 Z" fill="#e2e2e2"/><path d="M1.500 6 A4 4 0 0 1 7 2 M1 3 L1.500 6 L4.300 5" fill="none" stroke="#e2e2e2" stroke-width="1.100"/></svg>
<svg style="left:19.2px;top:255.2px" width="2.4" height="2.4" viewBox="0 0 2.4 2.4"><path d="M2.4 0 V2.4 H0 Z" fill="#b8b8b8"/></svg>
<svg style="left:6.300000000000001px;top:262.0px" width="12" height="12.6" viewBox="0 0 14 14"><path d="M2 9 L8.500 2.500 L12.500 6.500 L7.500 11.500 H4.500 Z" fill="#e2e2e2"/><path d="M4 7 L8 11" stroke="#535353" stroke-width="1"/><path d="M3 12.500 H12" stroke="#e2e2e2" stroke-width="1"/></svg>
<svg style="left:19.2px;top:273.5px" width="2.4" height="2.4" viewBox="0 0 2.4 2.4"><path d="M2.4 0 V2.4 H0 Z" fill="#b8b8b8"/></svg>
<svg style="left:6.300000000000001px;top:280.2px" width="12" height="12.6" viewBox="0 0 14 14"><defs><linearGradient id="gr1" x1="0" x2="1"><stop offset="0" stop-color="#f0f0f0"/><stop offset="1" stop-color="#555"/></linearGradient></defs><rect x="1.5" y="2.500" width="11" height="9" fill="url(#gr1)" stroke="#e2e2e2" stroke-width="1"/></svg>
<svg style="left:19.2px;top:291.7px" width="2.4" height="2.4" viewBox="0 0 2.4 2.4"><path d="M2.4 0 V2.4 H0 Z" fill="#b8b8b8"/></svg>
<svg style="left:6.300000000000001px;top:298.2px" width="12" height="12.6" viewBox="0 0 14 14"><path d="M7 1 Q11.500 7 11.500 9.200 A4.500 4.300 0 0 1 2.500 9.200 Q2.500 7 7 1 Z" fill="#e2e2e2"/></svg>
<svg style="left:19.2px;top:309.7px" width="2.4" height="2.4" viewBox="0 0 2.4 2.4"><path d="M2.4 0 V2.4 H0 Z" fill="#b8b8b8"/></svg>
<svg style="left:6.300000000000001px;top:316.3px" width="12" height="12.6" viewBox="0 0 14 14"><circle cx="8.500" cy="5" r="3.800" fill="#e2e2e2"/><path d="M6 8 L2 13" stroke="#e2e2e2" stroke-width="1.800"/></svg>
<svg style="left:19.2px;top:327.8px" width="2.4" height="2.4" viewBox="0 0 2.4 2.4"><path d="M2.4 0 V2.4 H0 Z" fill="#b8b8b8"/></svg>
<svg style="left:6.300000000000001px;top:334.3px" width="12" height="12.6" viewBox="0 0 14 14"><path d="M2 12.500 L3 7 L8 2 L12 6 L7 11 Z" fill="none" stroke="#e2e2e2" stroke-width="1.300"/><circle cx="6.800" cy="7.500" r="1.100" fill="#e2e2e2"/><path d="M2 12.500 L6 8.300" stroke="#e2e2e2" stroke-width="0.900"/></svg>
<svg style="left:19.2px;top:345.8px" width="2.4" height="2.4" viewBox="0 0 2.4 2.4"><path d="M2.4 0 V2.4 H0 Z" fill="#b8b8b8"/></svg>
<span class="t" style="top:350.77px;height:16.25px;line-height:16.25px;font-size:12.5px;color:#e2e2e2;font-family:'Liberation Serif',serif;left:8.48px;transform-origin:50% 50%;transform:scale(1.0000,1.0200);">T</span>
<svg style="left:19.2px;top:363.9px" width="2.4" height="2.4" viewBox="0 0 2.4 2.4"><path d="M2.4 0 V2.4 H0 Z" fill="#b8b8b8"/></svg>
<svg style="left:6.300000000000001px;top:370.4px" width="12" height="12.6" viewBox="0 0 14 14"><path d="M4 1 L11 8.500 L7.500 8.700 L5.300 12.500 Z" fill="#e2e2e2"/></svg>
<svg style="left:19.2px;top:381.9px" width="2.4" height="2.4" viewBox="0 0 2.4 2.4"><path d="M2.4 0 V2.4 H0 Z" fill="#b8b8b8"/></svg>
<svg style="left:6.300000000000001px;top:389.2px" width="12" height="12.6" viewBox="0 0 14 14"><rect x="1.5" y="2.500" width="11" height="9" fill="#6a6a6a" stroke="#e2e2e2" stroke-width="1.300"/></svg>
<svg style="left:19.2px;top:400.7px" width="2.4" height="2.4" viewBox="0 0 2.4 2.4"><path d="M2.4 0 V2.4 H0 Z" fill="#b8b8b8"/></svg>
<svg style="left:6.300000000000001px;top:406.5px" width="12" height="12.6" viewBox="0 0 14 14"><path d="M4 7 V3.500 Q4.700 2.500 5.500 3.500 V2.500 Q6.300 1.500 7.200 2.500 V3 Q8 2 8.800 3 V4.500 Q9.800 3.800 10.500 4.800 V9 Q10.500 12.500 7.500 12.500 Q5 12.500 4 10.500 L2 7.800 Q2.500 6.500 4 7.800 Z" fill="#e2e2e2"/></svg>
<svg style="left:19.2px;top:418.0px" width="2.4" height="2.4" viewBox="0 0 2.4 2.4"><path d="M2.4 0 V2.4 H0 Z" fill="#b8b8b8"/></svg>
<svg style="left:6.300000000000001px;top:424.7px" width="12" height="12.6" viewBox="0 0 14 14"><circle cx="5.800" cy="5.800" r="4" fill="none" stroke="#e2e2e2" stroke-width="1.500"/><path d="M8.800 8.800 L13 13" stroke="#e2e2e2" stroke-width="2"/></svg>
<svg style="left:6.300000000000001px;top:442.7px" width="12" height="12.6" viewBox="0 0 14 14"><circle cx="3" cy="7" r="1.300" fill="#e2e2e2"/><circle cx="7" cy="7" r="1.300" fill="#e2e2e2"/><circle cx="11" cy="7" r="1.300" fill="#e2e2e2"/></svg>
<svg style="left:19.2px;top:454.2px" width="2.4" height="2.4" viewBox="0 0 2.4 2.4"><path d="M2.4 0 V2.4 H0 Z" fill="#b8b8b8"/></svg>
<svg style="left:3px;top:461.500px" width="20" height="9" viewBox="0 0 20 9"><rect x="0.5" y="0.5" width="4" height="4" fill="#111" stroke="#e2e2e2" stroke-width="0.700"/><rect x="3" y="3.500" width="4" height="4" fill="#fff"/><path d="M12.500 2.500 Q16.500 2 17 6.500 M12.500 2.500 l1.500 -1.500 M12.500 2.500 l1.500 1.500 M17 6.500 l-1.500 -1.500 M17 6.500 l1.500 -1.500" fill="none" stroke="#e2e2e2" stroke-width="0.900"/></svg>
<div style="left:9.6px;top:481px;width:10.8px;height:11.8px;background:#fff;box-shadow:0 0 0 0.8px #222;"></div>
<div style="left:3px;top:474.3px;width:11.4px;height:11.3px;background:#fff;box-shadow:0 0 0 0.8px #222;"></div>
<svg style="left:6.300000000000001px;top:500.4px" width="12" height="12.6" viewBox="0 0 14 14"><rect x="1.5" y="2.500" width="11" height="9" fill="none" stroke="#e2e2e2" stroke-width="1.200"/><circle cx="7" cy="7" r="2.600" fill="none" stroke="#e2e2e2" stroke-width="1" stroke-dasharray="1.200 0.800"/></svg>
<svg style="left:6.300000000000001px;top:518.5px" width="12" height="12.6" viewBox="0 0 14 14"><rect x="4.500" y="1.500" width="8" height="7" fill="none" stroke="#e2e2e2" stroke-width="1.200"/><rect x="1.500" y="4.500" width="8" height="7" fill="#535353" stroke="#e2e2e2" stroke-width="1.200"/></svg>
<svg style="left:19.2px;top:530.0px" width="2.4" height="2.4" viewBox="0 0 2.4 2.4"><path d="M2.4 0 V2.4 H0 Z" fill="#b8b8b8"/></svg>
<div style="left:871px;top:41px;width:209px;height:679px;background:#535353;"></div>
<div style="left:869px;top:41px;width:211px;height:8px;background:#424242;"></div>
<svg style="left:886.2px;top:43.2px" width="4.6" height="3.800" viewBox="0 0 6 4.400"><path d="M2.700 0.200 L0.500 2.200 L2.700 4.200 Z M5.700 0.200 L3.500 2.200 L5.700 4.200 Z" fill="#cfcfcf"/></svg>
<svg style="left:1066.700px;top:43.2px" width="4.6" height="3.800" viewBox="0 0 6 4.400"><path d="M0.300 0.200 L2.500 2.200 L0.300 4.200 Z M3.300 0.200 L5.500 2.200 L3.300 4.200 Z" fill="#cfcfcf"/></svg>
<div style="left:895px;top:49px;width:1.5px;height:671px;background:#3a3a3a;"></div>
<div style="left:1075.5px;top:49px;width:4.5px;height:671px;background:#454545;"></div>
<div style="left:876px;top:51.5px;width:14px;height:1px;background:#474747;"></div>
<svg style="left:876.5px;top:58.3px" width="13" height="13" viewBox="0 0 14 14"><path d="M1 2 H6 M1 4.300 H5 M1 6.600 H4" stroke="#e2e2e2" stroke-width="1"/><path d="M12.500 1.500 Q13.500 2 13 3 L8 9 L6.300 7.600 Z" fill="#e2e2e2"/><path d="M5.800 8.500 L7.300 9.800 Q6.500 12.500 3 12.500 Q4.500 11.300 4.500 10 Q4.800 8.500 5.800 8.500 Z" fill="#e2e2e2"/></svg>
<svg style="left:876.5px;top:77.7px" width="13" height="13" viewBox="0 0 14 14"><path d="M1 4 H13 M1 10 H13" stroke="#e2e2e2" stroke-width="1.200"/><path d="M2 2 h3.500 l1.500 2 l-1.500 2 h-3.500 Z" fill="#e2e2e2"/><path d="M12 8 h-2.500 l-2 2 l2 2 h2.500 Z" fill="#e2e2e2"/></svg>
<div style="left:872px;top:96.7px;width:22px;height:1px;background:#434343;"></div>
<div style="left:876px;top:100.2px;width:14px;height:1px;background:#474747;"></div>
<span class="t" style="top:105.4px;height:15.6px;line-height:15.6px;font-size:12px;color:#e2e2e2;left:877.44px;transform-origin:50% 50%;transform:scale(0.9500,1.0500);">A|</span>
<span class="t" style="top:123.85px;height:14.3px;line-height:14.3px;font-size:11px;color:#e2e2e2;font-weight:bold;left:879.94px;transform-origin:50% 50%;">¶</span>
<div style="left:872px;top:146.3px;width:22px;height:1px;background:#434343;"></div>
<div style="left:876px;top:149.5px;width:14px;height:1px;background:#474747;"></div>
<span class="t" style="top:152.6px;height:15.6px;line-height:15.6px;font-size:12px;color:#e2e2e2;font-family:'Liberation Serif',serif;left:879.33px;transform-origin:50% 50%;font-style:italic;">A</span>
<div style="left:872px;top:174.6px;width:22px;height:1px;background:#434343;"></div>
<div style="left:876px;top:177.5px;width:14px;height:1px;background:#474747;"></div>
<svg style="left:876.5px;top:182.7px" width="13" height="13" viewBox="0 0 14 14"><path d="M7 1.500 L12 4.200 V9.800 L7 12.500 L2 9.800 V4.200 Z M2 4.200 L7 7 L12 4.200 M7 7 V12.500" fill="none" stroke="#bdbdbd" stroke-width="1.100"/></svg>
<div style="left:872px;top:203px;width:22px;height:1px;background:#434343;"></div>
<div style="left:896.5px;top:49px;width:179px;height:19px;background:#424242;"></div>
<div style="left:1009.3px;top:49px;width:39.6px;height:19.5px;background:#535353;"></div>
<span class="t" style="top:53.66px;height:9.88px;line-height:9.88px;font-size:7.6px;color:#bcbcbc;font-weight:bold;left:901.8px;transform-origin:0 50%;transform:scale(0.7379,1.0000);">Swatc</span>
<span class="t" style="top:53.66px;height:9.88px;line-height:9.88px;font-size:7.6px;color:#bcbcbc;font-weight:bold;left:924.4px;transform-origin:0 50%;transform:scale(0.8214,1.0000);">Gradi</span>
<span class="t" style="top:53.66px;height:9.88px;line-height:9.88px;font-size:7.6px;color:#bcbcbc;font-weight:bold;left:947px;transform-origin:0 50%;transform:scale(0.7896,1.0000);">Patter</span>
<span class="t" style="top:53.66px;height:9.88px;line-height:9.88px;font-size:7.6px;color:#bcbcbc;font-weight:bold;left:969.3px;transform-origin:0 50%;transform:scale(0.7926,1.0000);">Histor</span>
<span class="t" style="top:53.66px;height:9.88px;line-height:9.88px;font-size:7.6px;color:#bcbcbc;font-weight:bold;left:991.8px;transform-origin:0 50%;transform:scale(0.7069,1.0000);">Action</span>
<span class="t" style="top:53.53px;height:10.14px;line-height:10.14px;font-size:7.8px;color:#fafafa;font-weight:bold;left:1014.4px;transform-origin:0 50%;transform:scale(0.7776,1.0000);">Properties</span>
<svg style="left:1064.9px;top:55.800000000000004px" width="7" height="5.600" viewBox="0 0 7 5.600"><path d="M0 0.600 H7 M0 2.800 H7 M0 5 H7" stroke="#c8c8c8" stroke-width="1"/></svg>
<div style="left:903.3px;top:73.3px;width:13.4px;height:14.5px;background:#303030;border-radius:1px;"></div>
<svg style="left:906px;top:75.500px" width="8" height="10" viewBox="0 0 8 10"><path d="M0.600 0.600 H5 L7.400 3 V9.400 H0.600 Z M5 0.600 V3 H7.400" fill="none" stroke="#e2e2e2" stroke-width="1.100"/></svg>
<span class="t" style="top:77.39px;height:9.62px;line-height:9.62px;font-size:7.4px;color:#e6e6e6;left:920px;transform-origin:0 50%;transform:scale(0.8609,1.0000);">Document</span>
<div style="left:896.5px;top:92px;width:170px;height:1px;background:#454545;"></div>
<svg style="left:899.5px;top:100px" width="6" height="4" viewBox="0 0 6 4"><path d="M0.500 0.700 L3 3.300 L5.500 0.700" fill="none" stroke="#aaa" stroke-width="1"/></svg>
<span class="t" style="top:97.13px;height:10.14px;line-height:10.14px;font-size:7.8px;color:#f4f4f4;font-weight:bold;left:910px;transform-origin:0 50%;transform:scale(0.7928,1.0000);">Canvas</span>
<span class="t" style="top:115.19px;height:9.62px;line-height:9.62px;font-size:7.4px;color:#e6e6e6;left:929px;transform-origin:0 50%;transform:scale(0.9306,1.0000);">W</span>
<div style="left:939px;top:115.6px;width:31px;height:8.8px;background:#3d3d3d;"></div>
<span class="t" style="top:115.32px;height:9.36px;line-height:9.36px;font-size:7.2px;color:#ececec;left:940.7px;transform-origin:0 50%;transform:scale(0.8327,1.0000);">2232 px</span>
<span class="t" style="top:115.19px;height:9.62px;line-height:9.62px;font-size:7.4px;color:#b0b0b0;left:980px;transform-origin:0 50%;transform:scale(1.0127,1.0000);">X</span>
<div style="left:989px;top:115.6px;width:32px;height:8.8px;background:#4b4b4b;"></div>
<span class="t" style="top:115.45px;height:9.1px;line-height:9.1px;font-size:7px;color:#6a6a6a;left:991px;transform-origin:0 50%;transform:scale(0.9067,1.0000);">0 px</span>
<span class="t" style="top:132.69px;height:9.62px;line-height:9.62px;font-size:7.4px;color:#e6e6e6;left:929.5px;transform-origin:0 50%;transform:scale(0.9357,1.0000);">H</span>
<div style="left:939px;top:133px;width:31px;height:8.8px;background:#3d3d3d;"></div>
<span class="t" style="top:132.82px;height:9.36px;line-height:9.36px;font-size:7.2px;color:#ececec;left:940.7px;transform-origin:0 50%;transform:scale(0.8327,1.0000);">2854 px</span>
<span class="t" style="top:132.69px;height:9.62px;line-height:9.62px;font-size:7.4px;color:#b0b0b0;left:980px;transform-origin:0 50%;transform:scale(1.0127,1.0000);">Y</span>
<div style="left:989px;top:133px;width:32px;height:8.8px;background:#4b4b4b;"></div>
<span class="t" style="top:132.95px;height:9.1px;line-height:9.1px;font-size:7px;color:#6a6a6a;left:991px;transform-origin:0 50%;transform:scale(0.9067,1.0000);">0 px</span>
<svg style="left:907.800px;top:122.500px" width="5.400" height="11.500" viewBox="0 0 5.400 11.500"><rect x="0.800" y="0.700" width="3.800" height="4.600" rx="1.900" fill="none" stroke="#e2e2e2" stroke-width="1.100"/><rect x="0.800" y="6.200" width="3.800" height="4.600" rx="1.900" fill="none" stroke="#e2e2e2" stroke-width="1.100"/><path d="M2.700 3.800 V7.700" stroke="#e2e2e2" stroke-width="1.100"/></svg>
<div style="left:939px;top:151px;width:14.3px;height:15.7px;background:#2c2c2c;border-radius:1px;"></div>
<svg style="left:942.200px;top:153.400px" width="8" height="11" viewBox="0 0 8 11"><rect x="0.500" y="0.500" width="7" height="10" fill="none" stroke="#e2e2e2" stroke-width="1"/><circle cx="4" cy="4" r="1.500" fill="#e2e2e2"/><path d="M1.500 10 Q1.500 6.300 4 6.300 Q6.500 6.300 6.500 10 Z" fill="#e2e2e2"/></svg>
<svg style="left:956.700px;top:154.400px" width="11.200" height="9.400" viewBox="0 0 11.200 9.400"><rect x="0.500" y="0.500" width="10.200" height="8.400" fill="none" stroke="#e2e2e2" stroke-width="1"/><circle cx="5.600" cy="3.500" r="1.400" fill="#e2e2e2"/><path d="M3 8.400 Q3 5.400 5.600 5.400 Q8.200 5.400 8.200 8.400 Z" fill="#e2e2e2"/></svg>
<span class="t" style="top:175.32px;height:9.36px;line-height:9.36px;font-size:7.2px;color:#e6e6e6;left:939px;transform-origin:0 50%;transform:scale(0.8536,1.0000);">Resolution: 250 pixels/inch</span>
<span class="t" style="top:192.99px;height:9.62px;line-height:9.62px;font-size:7.4px;color:#e6e6e6;left:918.4px;transform-origin:0 50%;transform:scale(0.8054,1.0000);">Mode</span>
<div style="left:939px;top:192.2px;width:82px;height:12.8px;background:#3d3d3d;border-radius:1px;"></div>
<span class="t" style="top:194.02px;height:9.36px;line-height:9.36px;font-size:7.2px;color:#ececec;left:943.3px;transform-origin:0 50%;transform:scale(0.7827,1.0000);">RGB Color</span>
<svg style="left:1013.7px;top:197px" width="6" height="4" viewBox="0 0 6 4"><path d="M0.500 0.700 L3 3.300 L5.500 0.700" fill="none" stroke="#aaa" stroke-width="1"/></svg>
<div style="left:939px;top:210px;width:82px;height:12.9px;background:#3d3d3d;border-radius:1px;"></div>
<span class="t" style="top:211.82px;height:9.36px;line-height:9.36px;font-size:7.2px;color:#ececec;left:943.3px;transform-origin:0 50%;transform:scale(0.8611,1.0000);">16 Bits/Channel</span>
<svg style="left:1013.7px;top:215px" width="6" height="4" viewBox="0 0 6 4"><path d="M0.500 0.700 L3 3.300 L5.500 0.700" fill="none" stroke="#aaa" stroke-width="1"/></svg>
<span class="t" style="top:229.69px;height:9.62px;line-height:9.62px;font-size:7.4px;color:#e6e6e6;left:925.6px;transform-origin:0 50%;transform:scale(0.7828,1.0000);">Fill</span>
<div style="left:939px;top:228.200px;width:11px;height:11.800px;background:#4e4e4e;box-shadow:inset 0 0 0 0.800px #3a3a3a;"></div>
<div style="left:953.3px;top:228.9px;width:67.7px;height:12.1px;background:#3d3d3d;border-radius:1px;"></div>
<span class="t" style="top:230.32px;height:9.36px;line-height:9.36px;font-size:7.2px;color:#ececec;left:957.3px;transform-origin:0 50%;transform:scale(0.8494,1.0000);">Transparent</span>
<svg style="left:1013.7px;top:233.5px" width="6" height="4" viewBox="0 0 6 4"><path d="M0.500 0.700 L3 3.300 L5.500 0.700" fill="none" stroke="#aaa" stroke-width="1"/></svg>
<div style="left:896.5px;top:246.7px;width:170px;height:1px;background:#454545;"></div>
<svg style="left:899.5px;top:255.60000000000002px" width="6" height="4" viewBox="0 0 6 4"><path d="M0.500 0.700 L3 3.300 L5.500 0.700" fill="none" stroke="#aaa" stroke-width="1"/></svg>
<span class="t" style="top:252.73px;height:10.14px;line-height:10.14px;font-size:7.8px;color:#f4f4f4;font-weight:bold;left:911px;transform-origin:0 50%;transform:scale(0.8060,1.0000);">Rulers &amp; Grids</span>
<div style="left:903.3px;top:270.4px;width:15.1px;height:15.6px;background:#2c2c2c;border-radius:1px;"></div>
<svg style="left:905.300px;top:272.400px" width="11" height="11.600" viewBox="0 0 11 11.600"><path d="M0 0 H11 V3 H3 V11.600 H0 Z" fill="#e2e2e2"/><path d="M4.500 0 V1.500 M6.500 0 V1.500 M8.500 0 V1.500 M0 4.500 H1.500 M0 6.500 H1.500 M0 8.500 H1.500" stroke="#2c2c2c" stroke-width="0.600"/></svg>
<svg style="left:925.600px;top:272px" width="11.100" height="12.400" viewBox="0 0 11.100 12.400"><path d="M0.500 0.500 H10.600 V11.900 H0.500 Z M3.900 0.500 V11.900 M7.300 0.500 V11.900 M0.500 4.300 H10.600 M0.500 8.100 H10.600" fill="none" stroke="#e2e2e2" stroke-width="0.900"/></svg>
<svg style="left:946.200px;top:272px" width="11.100" height="12.400" viewBox="0 0 11.100 12.400"><rect x="0.500" y="0.500" width="10.100" height="11.400" fill="#6a6a6a" stroke="#e2e2e2" stroke-width="0.900"/><path d="M3.900 0.500 V11.900 M7.300 0.500 V11.900 M0.500 4.300 H10.600 M0.500 8.100 H10.600" fill="none" stroke="#8c8c8c" stroke-width="0.500" stroke-dasharray="1 1"/></svg>
<div style="left:975px;top:272.7px;width:46px;height:12.3px;background:#3d3d3d;border-radius:1px;"></div>
<span class="t" style="top:274.32px;height:9.36px;line-height:9.36px;font-size:7.2px;color:#ececec;left:979px;transform-origin:0 50%;transform:scale(0.8078,1.0000);">Pixels</span>
<svg style="left:1013.7px;top:277.3px" width="6" height="4" viewBox="0 0 6 4"><path d="M0.500 0.700 L3 3.300 L5.500 0.700" fill="none" stroke="#aaa" stroke-width="1"/></svg>
<div style="left:896.5px;top:294.4px;width:170px;height:1px;background:#454545;"></div>
<svg style="left:899.5px;top:302.8px" width="6" height="4" viewBox="0 0 6 4"><path d="M0.500 0.700 L3 3.300 L5.500 0.700" fill="none" stroke="#aaa" stroke-width="1"/></svg>
<span class="t" style="top:299.93px;height:10.14px;line-height:10.14px;font-size:7.8px;color:#f4f4f4;font-weight:bold;left:911px;transform-origin:0 50%;transform:scale(0.7565,1.0000);">Guides</span>
<div style="left:903.3px;top:317px;width:15.1px;height:16.3px;background:#2c2c2c;border-radius:1px;"></div>
<svg style="left:905.300px;top:319px" width="11" height="12.400" viewBox="0 0 11 12.400"><path d="M3.500 0 V12.400 M0 4 H11 M0 8.400 H11" stroke="#e2e2e2" stroke-width="1"/></svg>
<svg style="left:925.600px;top:319px" width="12" height="12.400" viewBox="0 0 12 12.400"><path d="M3 0 V12.400 M6 0 V8 M0 3.500 H10 M0 7 H7" stroke="#e2e2e2" stroke-width="0.900"/><rect x="7" y="8" width="4.500" height="3.800" fill="#e2e2e2"/><path d="M8 8 V6.800 Q9.250 5.500 10.500 6.800 V8" fill="none" stroke="#e2e2e2" stroke-width="0.800"/></svg>
<div style="left:944.4px;top:317px;width:14.5px;height:16.3px;background:#2c2c2c;border-radius:1px;"></div>
<svg style="left:946.400px;top:319px" width="11" height="12.400" viewBox="0 0 11 12.400"><path d="M4.500 0 V12.400 M0 4.500 H4 M1.500 3 L0 4.500 L1.500 6 M6 4.500 H10.500" stroke="#e2e2e2" stroke-width="0.900" fill="none"/><rect x="7" y="6.500" width="3" height="4" fill="#e2e2e2"/></svg>
<div style="left:975px;top:320px;width:46px;height:13.3px;background:#3d3d3d;border-radius:1px;"></div>
<div style="left:979.5px;top:326.3px;width:26px;height:1.2px;background:#e0e0e0;"></div>
<svg style="left:1013.7px;top:325px" width="6" height="4" viewBox="0 0 6 4"><path d="M0.500 0.700 L3 3.300 L5.500 0.700" fill="none" stroke="#aaa" stroke-width="1"/></svg>
<div style="left:896.5px;top:342.2px;width:170px;height:1px;background:#454545;"></div>
<svg style="left:899.5px;top:350px" width="6" height="4" viewBox="0 0 6 4"><path d="M0.500 0.700 L3 3.300 L5.500 0.700" fill="none" stroke="#aaa" stroke-width="1"/></svg>
<span class="t" style="top:347.13px;height:10.14px;line-height:10.14px;font-size:7.8px;color:#f4f4f4;font-weight:bold;left:911px;transform-origin:0 50%;transform:scale(0.8113,1.0000);">Quick Actions</span>
<div style="left:1066.7px;top:93px;width:8.8px;height:273px;background:#4a4a4a;"></div>
<div style="left:1067.2px;top:105.6px;width:7.4px;height:221px;background:#6a6a6a;"></div>
<svg style="left:1068.400px;top:99px" width="5" height="3.400" viewBox="0 0 5 3.400"><path d="M0.400 3 L2.500 0.600 L4.600 3" fill="none" stroke="#8a8a8a" stroke-width="0.900"/></svg>
<svg style="left:1068.400px;top:359.500px" width="5" height="3.400" viewBox="0 0 5 3.400"><path d="M0.400 0.400 L2.500 2.800 L4.600 0.400" fill="none" stroke="#8a8a8a" stroke-width="0.900"/></svg>
<div style="left:896.5px;top:385px;width:183.5px;height:2.2px;background:#3a3a3a;"></div>
<div style="left:896.5px;top:387.2px;width:179px;height:19px;background:#424242;"></div>
<div style="left:896.5px;top:387.2px;width:29.1px;height:19.3px;background:#535353;"></div>
<span class="t" style="top:391.83px;height:10.14px;line-height:10.14px;font-size:7.8px;color:#fafafa;font-weight:bold;left:901.6px;transform-origin:0 50%;transform:scale(0.7314,1.0000);">Layers</span>
<svg style="left:1065.5px;top:394.09999999999997px" width="7" height="5.600" viewBox="0 0 7 5.600"><path d="M0 0.600 H7 M0 2.800 H7 M0 5 H7" stroke="#c8c8c8" stroke-width="1"/></svg>
<div style="left:899.3px;top:414.2px;width:52.5px;height:11.1px;background:#3a3a3a;border-radius:1px;"></div>
<svg style="left:902.500px;top:416.300px" width="7" height="7.400" viewBox="0 0 7 7.400"><circle cx="2.900" cy="2.900" r="2.100" fill="none" stroke="#e2e2e2" stroke-width="1.100"/><path d="M4.500 4.700 L6.500 7" stroke="#e2e2e2" stroke-width="1.200"/></svg>
<span class="t" style="top:415.32px;height:9.36px;line-height:9.36px;font-size:7.2px;color:#ececec;left:912px;transform-origin:0 50%;transform:scale(0.9034,1.0000);">Kind</span>
<svg style="left:945px;top:418.3px" width="6" height="4" viewBox="0 0 6 4"><path d="M0.500 0.700 L3 3.300 L5.500 0.700" fill="none" stroke="#aaa" stroke-width="1"/></svg>
<svg style="left:958.8px;top:415.25px" width="9" height="9.5" viewBox="0 0 10 10"><rect x="0.600" y="1.200" width="8.800" height="7.600" fill="none" stroke="#e2e2e2" stroke-width="1.100"/><path d="M1.800 7.500 L3.800 5 L5.200 6.500 L6.300 5.500 L8.200 7.500 Z" fill="#e2e2e2"/><circle cx="6.800" cy="3.500" r="0.900" fill="#e2e2e2"/></svg>
<svg style="left:974.5px;top:415.25px" width="9" height="9.5" viewBox="0 0 10 10"><circle cx="5" cy="5" r="4" fill="none" stroke="#e2e2e2" stroke-width="1.100"/><path d="M5 1 A4 4 0 0 1 5 9 Z" fill="#e2e2e2" transform="rotate(45 5 5)"/></svg>
<span class="t" style="top:413.5px;height:13.0px;line-height:13.0px;font-size:10px;color:#e2e2e2;font-weight:bold;font-family:'Liberation Serif',serif;left:990.66px;transform-origin:50% 50%;">T</span>
<svg style="left:1004.5px;top:415.25px" width="9" height="9.5" viewBox="0 0 10 10"><rect x="1.800" y="1.800" width="6.400" height="6.400" fill="none" stroke="#e2e2e2" stroke-width="1"/><rect x="0.300" y="0.300" width="2.600" height="2.600" fill="#e2e2e2"/><rect x="7.100" y="0.300" width="2.600" height="2.600" fill="#e2e2e2"/><rect x="0.300" y="7.100" width="2.600" height="2.600" fill="#e2e2e2"/><rect x="7.100" y="7.100" width="2.600" height="2.600" fill="#e2e2e2"/></svg>
<svg style="left:1019.9000000000001px;top:415.25px" width="9" height="9.5" viewBox="0 0 10 10"><path d="M1.500 0.600 H6 L8.500 3.200 V9.400 H1.500 Z" fill="#e2e2e2"/><path d="M6 0.600 V3.200 H8.500" fill="none" stroke="#535353" stroke-width="0.700"/><rect x="2.800" y="5.500" width="3" height="3" fill="#535353"/></svg>
<div style="left:1035.300px;top:418px;width:5px;height:8px;background:#333;border-radius:2.5px;"></div>
<div style="left:1034.800px;top:413.800px;width:6px;height:6.400px;background:#f0f0f0;border-radius:3px;"></div>
<div style="left:896.5px;top:429px;width:179px;height:1px;background:#454545;"></div>
<div style="left:899.3px;top:434.2px;width:78.5px;height:11.1px;background:#4c4c4c;border-radius:1px;"></div>
<span class="t" style="top:435.12px;height:9.36px;line-height:9.36px;font-size:7.2px;color:#777;left:903px;transform-origin:0 50%;transform:scale(0.8631,1.0000);">Normal</span>
<svg style="left:970px;top:438px" width="6" height="4" viewBox="0 0 6 4"><path d="M0.500 0.700 L3 3.300 L5.500 0.700" fill="none" stroke="#6a6a6a" stroke-width="1"/></svg>
<span class="t" style="top:435.12px;height:9.36px;line-height:9.36px;font-size:7.2px;color:#7e7e7e;left:983px;transform-origin:0 50%;transform:scale(0.8569,1.0000);">Opacity:</span>
<div style="left:1009px;top:434.6px;width:22px;height:10.4px;background:#484848;"></div>
<span class="t" style="top:435.25px;height:9.1px;line-height:9.1px;font-size:7px;color:#6c6c6c;left:1012px;transform-origin:0 50%;transform:scale(0.8377,1.0000);">100%</span>
<div style="left:1032px;top:434.6px;width:7px;height:10.4px;background:#4c4c4c;"></div>
<svg style="left:1032.5px;top:438px" width="6" height="4" viewBox="0 0 6 4"><path d="M0.500 0.700 L3 3.300 L5.500 0.700" fill="none" stroke="#686868" stroke-width="1"/></svg>
<div style="left:896.5px;top:448.2px;width:179px;height:1px;background:#454545;"></div>
<span class="t" style="top:454.22px;height:9.36px;line-height:9.36px;font-size:7.2px;color:#7e7e7e;left:899.5px;transform-origin:0 50%;transform:scale(0.8029,1.0000);">Lock:</span>
<svg style="left:919.55px;top:454.4px" width="8.5" height="9" viewBox="0 0 10 10"><path d="M0.500 0.500 h3 v3 h-3 Z M6.500 0.500 h3 v3 h-3 Z M3.500 3.500 h3 v3 h-3 Z M0.500 6.500 h3 v3 h-3 Z M6.500 6.500 h3 v3 h-3 Z" fill="#c4c4c4"/><rect x="0.500" y="0.500" width="9" height="9" fill="none" stroke="#c4c4c4" stroke-width="0.600"/></svg>
<svg style="left:933.3px;top:454.15px" width="9" height="9.5" viewBox="0 0 10 10"><path d="M9 0.500 Q10 1 9.500 2 L5 7 L3.800 6 Z" fill="#c4c4c4"/><path d="M3.300 6.700 L4.400 7.600 Q4 9.600 0.800 9.600 Q2.300 8.600 2.300 7.600 Q2.500 6.700 3.300 6.700 Z" fill="#c4c4c4"/></svg>
<svg style="left:946.5px;top:454.15px" width="9" height="9.5" viewBox="0 0 10 10"><g transform="scale(1)"><path d="M5 0 L6.8 2.2 H5.5 V4.5 H7.8 V3.2 L10 5 L7.8 6.8 V5.5 H5.5 V7.8 H6.8 L5 10 L3.2 7.8 H4.5 V5.5 H2.2 V6.8 L0 5 L2.2 3.2 V4.5 H4.5 V2.2 H3.2 Z" fill="#c4c4c4"/></g></svg>
<svg style="left:960.5px;top:454.15px" width="9" height="9.5" viewBox="0 0 10 10"><path d="M2 0 V8 H10 M0 2 H8 V5" fill="none" stroke="#c4c4c4" stroke-width="1"/><path d="M8 6 V10 M6 8 H10" stroke="#c4c4c4" stroke-width="0"/></svg>
<svg style="left:974.5px;top:454.15px" width="9" height="9.5" viewBox="0 0 10 10"><rect x="1.500" y="4.500" width="7" height="5" rx="0.600" fill="#c4c4c4"/><path d="M3 4.500 V3 Q5 0 7 3 V4.500" fill="none" stroke="#c4c4c4" stroke-width="1.100"/></svg>
<span class="t" style="top:454.22px;height:9.36px;line-height:9.36px;font-size:7.2px;color:#7e7e7e;left:997px;transform-origin:0 50%;transform:scale(0.7687,1.0000);">Fill:</span>
<div style="left:1009px;top:453.8px;width:22px;height:10.4px;background:#484848;"></div>
<span class="t" style="top:454.35px;height:9.1px;line-height:9.1px;font-size:7px;color:#6c6c6c;left:1012px;transform-origin:0 50%;transform:scale(0.8377,1.0000);">100%</span>
<div style="left:1032px;top:453.8px;width:7px;height:10.4px;background:#4c4c4c;"></div>
<svg style="left:1032.5px;top:457px" width="6" height="4" viewBox="0 0 6 4"><path d="M0.500 0.700 L3 3.300 L5.500 0.700" fill="none" stroke="#686868" stroke-width="1"/></svg>
<div style="left:896.5px;top:469.3px;width:170.2px;height:236.2px;background:#4f4f4f;"></div>
<div style="left:915px;top:469.3px;width:0.8px;height:236.2px;background:#474747;"></div>
<svg style="left:901.300px;top:475.5px" width="9" height="6.400" viewBox="0 0 9 6.400"><path d="M0.300 3.200 Q4.500 -1.600 8.700 3.200 Q4.500 8 0.300 3.200 Z" fill="#c9c9c9"/><circle cx="4.500" cy="3.200" r="1.700" fill="#4f4f4f"/><circle cx="4.500" cy="3.200" r="0.800" fill="#c9c9c9"/></svg>
<svg style="left:927px;top:476.5px" width="6" height="4" viewBox="0 0 6 4"><path d="M0.500 0.700 L3 3.300 L5.500 0.700" fill="none" stroke="#aaa" stroke-width="1"/></svg>
<svg style="left:934.400px;top:474px" width="9.600" height="8.600" viewBox="0 0 9.600 8.600"><path d="M0.300 0.800 H3.800 L4.800 2 H9.300 V3.200 H0.300 Z" fill="#e2e2e2"/><rect x="0.300" y="3.800" width="9" height="4.500" fill="#e2e2e2"/></svg>
<span class="t" style="top:474.15px;height:9.1px;line-height:9.1px;font-size:7px;color:#ececec;left:951px;transform-origin:0 50%;transform:scale(0.8796,1.0000);">edita text</span>
<div style="left:896.5px;top:486.4px;width:170.2px;height:0.8px;background:#474747;"></div>
<div style="left:896.5px;top:515px;width:170.2px;height:0.8px;background:#474747;"></div>
<div style="left:896.5px;top:543.4px;width:170.2px;height:0.8px;background:#474747;"></div>
<div style="left:896.5px;top:572.2px;width:170.2px;height:0.8px;background:#474747;"></div>
<div style="left:896.5px;top:600.7px;width:170.2px;height:0.8px;background:#474747;"></div>
<div style="left:896.5px;top:629.8px;width:170.2px;height:0.8px;background:#474747;"></div>
<div style="left:896.5px;top:658px;width:170.2px;height:0.8px;background:#474747;"></div>
<div style="left:896.5px;top:686.2px;width:170.2px;height:0.8px;background:#474747;"></div>
<svg style="left:901.300px;top:498.1px" width="9" height="6.400" viewBox="0 0 9 6.400"><path d="M0.300 3.200 Q4.500 -1.600 8.700 3.200 Q4.500 8 0.300 3.200 Z" fill="#c9c9c9"/><circle cx="4.500" cy="3.200" r="1.700" fill="#4f4f4f"/><circle cx="4.500" cy="3.200" r="0.800" fill="#c9c9c9"/></svg>
<span class="t" style="top:492.85px;height:16.9px;line-height:16.9px;font-size:13px;color:#ededed;font-family:'Liberation Serif',serif;left:943.32px;transform-origin:50% 50%;transform:scale(1.0000,1.0500);">T</span>
<span class="t" style="top:496.75px;height:9.1px;line-height:9.1px;font-size:7px;color:#ececec;left:963px;transform-origin:0 50%;transform:scale(0.8690,1.0000);">Layer 2</span>
<svg style="left:901.300px;top:555.0px" width="9" height="6.400" viewBox="0 0 9 6.400"><path d="M0.300 3.200 Q4.500 -1.600 8.700 3.200 Q4.500 8 0.300 3.200 Z" fill="#c9c9c9"/><circle cx="4.500" cy="3.200" r="1.700" fill="#4f4f4f"/><circle cx="4.500" cy="3.200" r="0.800" fill="#c9c9c9"/></svg>
<span class="t" style="top:549.75px;height:16.9px;line-height:16.9px;font-size:13px;color:#ededed;font-family:'Liberation Serif',serif;left:943.32px;transform-origin:50% 50%;transform:scale(1.0000,1.0500);">T</span>
<span class="t" style="top:553.65px;height:9.1px;line-height:9.1px;font-size:7px;color:#ececec;left:963.1px;transform-origin:0 50%;transform:scale(0.9269,1.0000);">citta0000000...&lt;&lt;&lt;&lt;&lt;&lt;&lt;&lt;0 d</span>
<div style="left:902.300px;top:582.2px;width:7px;height:8px;box-shadow:inset 0 0 0 0.700px #5c5c5c;"></div>
<span class="t" style="top:578.25px;height:16.9px;line-height:16.9px;font-size:13px;color:#ededed;font-family:'Liberation Serif',serif;left:943.32px;transform-origin:50% 50%;transform:scale(1.0000,1.0500);">T</span>
<span class="t" style="top:582.15px;height:9.1px;line-height:9.1px;font-size:7px;color:#ececec;left:963.1px;transform-origin:0 50%;transform:scale(0.7187,1.0000);">1aa</span>
<svg style="left:901.300px;top:612.5999999999999px" width="9" height="6.400" viewBox="0 0 9 6.400"><path d="M0.300 3.200 Q4.500 -1.600 8.700 3.200 Q4.500 8 0.300 3.200 Z" fill="#c9c9c9"/><circle cx="4.500" cy="3.200" r="1.700" fill="#4f4f4f"/><circle cx="4.500" cy="3.200" r="0.800" fill="#c9c9c9"/></svg>
<span class="t" style="top:607.35px;height:16.9px;line-height:16.9px;font-size:13px;color:#ededed;font-family:'Liberation Serif',serif;left:943.32px;transform-origin:50% 50%;transform:scale(1.0000,1.0500);">T</span>
<span class="t" style="top:611.25px;height:9.1px;line-height:9.1px;font-size:7px;color:#ececec;left:963.1px;transform-origin:0 50%;transform:scale(0.8043,1.0000);">169</span>
<svg style="left:901.300px;top:640.8px" width="9" height="6.400" viewBox="0 0 9 6.400"><path d="M0.300 3.200 Q4.500 -1.600 8.700 3.200 Q4.500 8 0.300 3.200 Z" fill="#c9c9c9"/><circle cx="4.500" cy="3.200" r="1.700" fill="#4f4f4f"/><circle cx="4.500" cy="3.200" r="0.800" fill="#c9c9c9"/></svg>
<span class="t" style="top:635.55px;height:16.9px;line-height:16.9px;font-size:13px;color:#ededed;font-family:'Liberation Serif',serif;left:943.32px;transform-origin:50% 50%;transform:scale(1.0000,1.0500);">T</span>
<span class="t" style="top:639.45px;height:9.1px;line-height:9.1px;font-size:7px;color:#ececec;left:963.1px;transform-origin:0 50%;transform:scale(0.7529,1.0000);">m</span>
<svg style="left:901.300px;top:669.3px" width="9" height="6.400" viewBox="0 0 9 6.400"><path d="M0.300 3.200 Q4.500 -1.600 8.700 3.200 Q4.500 8 0.300 3.200 Z" fill="#c9c9c9"/><circle cx="4.500" cy="3.200" r="1.700" fill="#4f4f4f"/><circle cx="4.500" cy="3.200" r="0.800" fill="#c9c9c9"/></svg>
<span class="t" style="top:664.05px;height:16.9px;line-height:16.9px;font-size:13px;color:#ededed;font-family:'Liberation Serif',serif;left:943.32px;transform-origin:50% 50%;transform:scale(1.0000,1.0500);">T</span>
<span class="t" style="top:667.95px;height:9.1px;line-height:9.1px;font-size:7px;color:#ececec;left:963.1px;transform-origin:0 50%;transform:scale(0.8305,1.0000);">129 1 a</span>
<svg style="left:901.300px;top:697.8px" width="9" height="6.400" viewBox="0 0 9 6.400"><path d="M0.300 3.200 Q4.500 -1.600 8.700 3.200 Q4.500 8 0.300 3.200 Z" fill="#c9c9c9"/><circle cx="4.500" cy="3.200" r="1.700" fill="#4f4f4f"/><circle cx="4.500" cy="3.200" r="0.800" fill="#c9c9c9"/></svg>
<span class="t" style="top:692.55px;height:16.9px;line-height:16.9px;font-size:13px;color:#ededed;font-family:'Liberation Serif',serif;left:943.32px;transform-origin:50% 50%;transform:scale(1.0000,1.0500);">T</span>
<span class="t" style="top:696.45px;height:9.1px;line-height:9.1px;font-size:7px;color:#ececec;left:963.1px;transform-origin:0 50%;transform:scale(0.8246,1.0000);">01.01.1990</span>
<svg style="left:901.300px;top:526.5999999999999px" width="9" height="6.400" viewBox="0 0 9 6.400"><path d="M0.300 3.200 Q4.500 -1.600 8.700 3.200 Q4.500 8 0.300 3.200 Z" fill="#c9c9c9"/><circle cx="4.500" cy="3.200" r="1.700" fill="#4f4f4f"/><circle cx="4.500" cy="3.200" r="0.800" fill="#c9c9c9"/></svg>
<div style="left:937.800px;top:519.300px;width:15.500px;height:20.500px;background-color:#fff;background-image:linear-gradient(45deg,#d4d4d4 25%,transparent 25%,transparent 75%,#d4d4d4 75%),linear-gradient(45deg,#d4d4d4 25%,transparent 25%,transparent 75%,#d4d4d4 75%);background-size:6px 6px;background-position:0 0,3px 3px;"></div>
<div style="left:939px;top:521px;width:2px;height:2.5px;background:#8a4a3a;"></div>
<span class="t" style="top:525.25px;height:9.1px;line-height:9.1px;font-size:7px;color:#ececec;left:959.3px;transform-origin:0 50%;transform:scale(0.8433,1.0000);">Layer 3</span>
<div style="left:1066.7px;top:469.3px;width:8.8px;height:236.2px;background:#4a4a4a;"></div>
<div style="left:1067.2px;top:490.4px;width:7.4px;height:64.6px;background:#6a6a6a;"></div>
<svg style="left:1068.400px;top:475px" width="5" height="3.400" viewBox="0 0 5 3.400"><path d="M0.400 3 L2.500 0.600 L4.600 3" fill="none" stroke="#8a8a8a" stroke-width="0.900"/></svg>
<svg style="left:1068.400px;top:696.500px" width="5" height="3.400" viewBox="0 0 5 3.400"><path d="M0.400 0.400 L2.500 2.800 L4.600 0.400" fill="none" stroke="#8a8a8a" stroke-width="0.900"/></svg>
<div style="left:896.5px;top:705.5px;width:179px;height:14.5px;background:#535353;"></div>
<div style="left:896.5px;top:705.5px;width:179px;height:0.8px;background:#464646;"></div>
<svg style="left:948.3px;top:709.500px" width="9" height="9" viewBox="0 0 10 10"><rect x="0.500" y="3" width="5" height="4" rx="2" fill="none" stroke="#777" stroke-width="1"/><rect x="4.500" y="3" width="5" height="4" rx="2" fill="none" stroke="#777" stroke-width="1"/></svg>
<span class="t" style="top:708.8px;height:10.4px;line-height:10.4px;font-size:8px;color:#777;font-family:'Liberation Serif',serif;left:967.11px;transform-origin:50% 50%;font-style:italic;">fx</span>
<svg style="left:981.8px;top:709.500px" width="9" height="9" viewBox="0 0 10 10"><rect x="0.500" y="1.500" width="9" height="7" fill="#d8d8d8"/><circle cx="5" cy="5" r="2.200" fill="#535353"/></svg>
<svg style="left:999.0px;top:709.500px" width="9" height="9" viewBox="0 0 10 10"><circle cx="5" cy="5" r="4" fill="none" stroke="#d8d8d8" stroke-width="1.100"/><path d="M5 1 A4 4 0 0 1 5 9 Z" fill="#d8d8d8" transform="rotate(45 5 5)"/></svg>
<svg style="left:1016.1px;top:709.500px" width="9" height="9" viewBox="0 0 10 10"><path d="M0.300 1.500 H3.800 L4.800 2.700 H9.700 V8.800 H0.300 Z" fill="#d8d8d8"/></svg>
<svg style="left:1032.8px;top:709.500px" width="9" height="9" viewBox="0 0 10 10"><rect x="1" y="0.600" width="8" height="8.800" fill="none" stroke="#d8d8d8" stroke-width="1.100"/><path d="M5 3 V7 M3 5 H7" stroke="#d8d8d8" stroke-width="1.100"/></svg>
<svg style="left:1049.1px;top:709.500px" width="9" height="9" viewBox="0 0 10 10"><path d="M1.500 2.500 H8.500 M3.500 2.500 V1 H6.500 V2.500 M2.300 2.500 L2.800 9.400 H7.200 L7.700 2.500" fill="none" stroke="#777" stroke-width="1"/></svg>
</div></body></html>
